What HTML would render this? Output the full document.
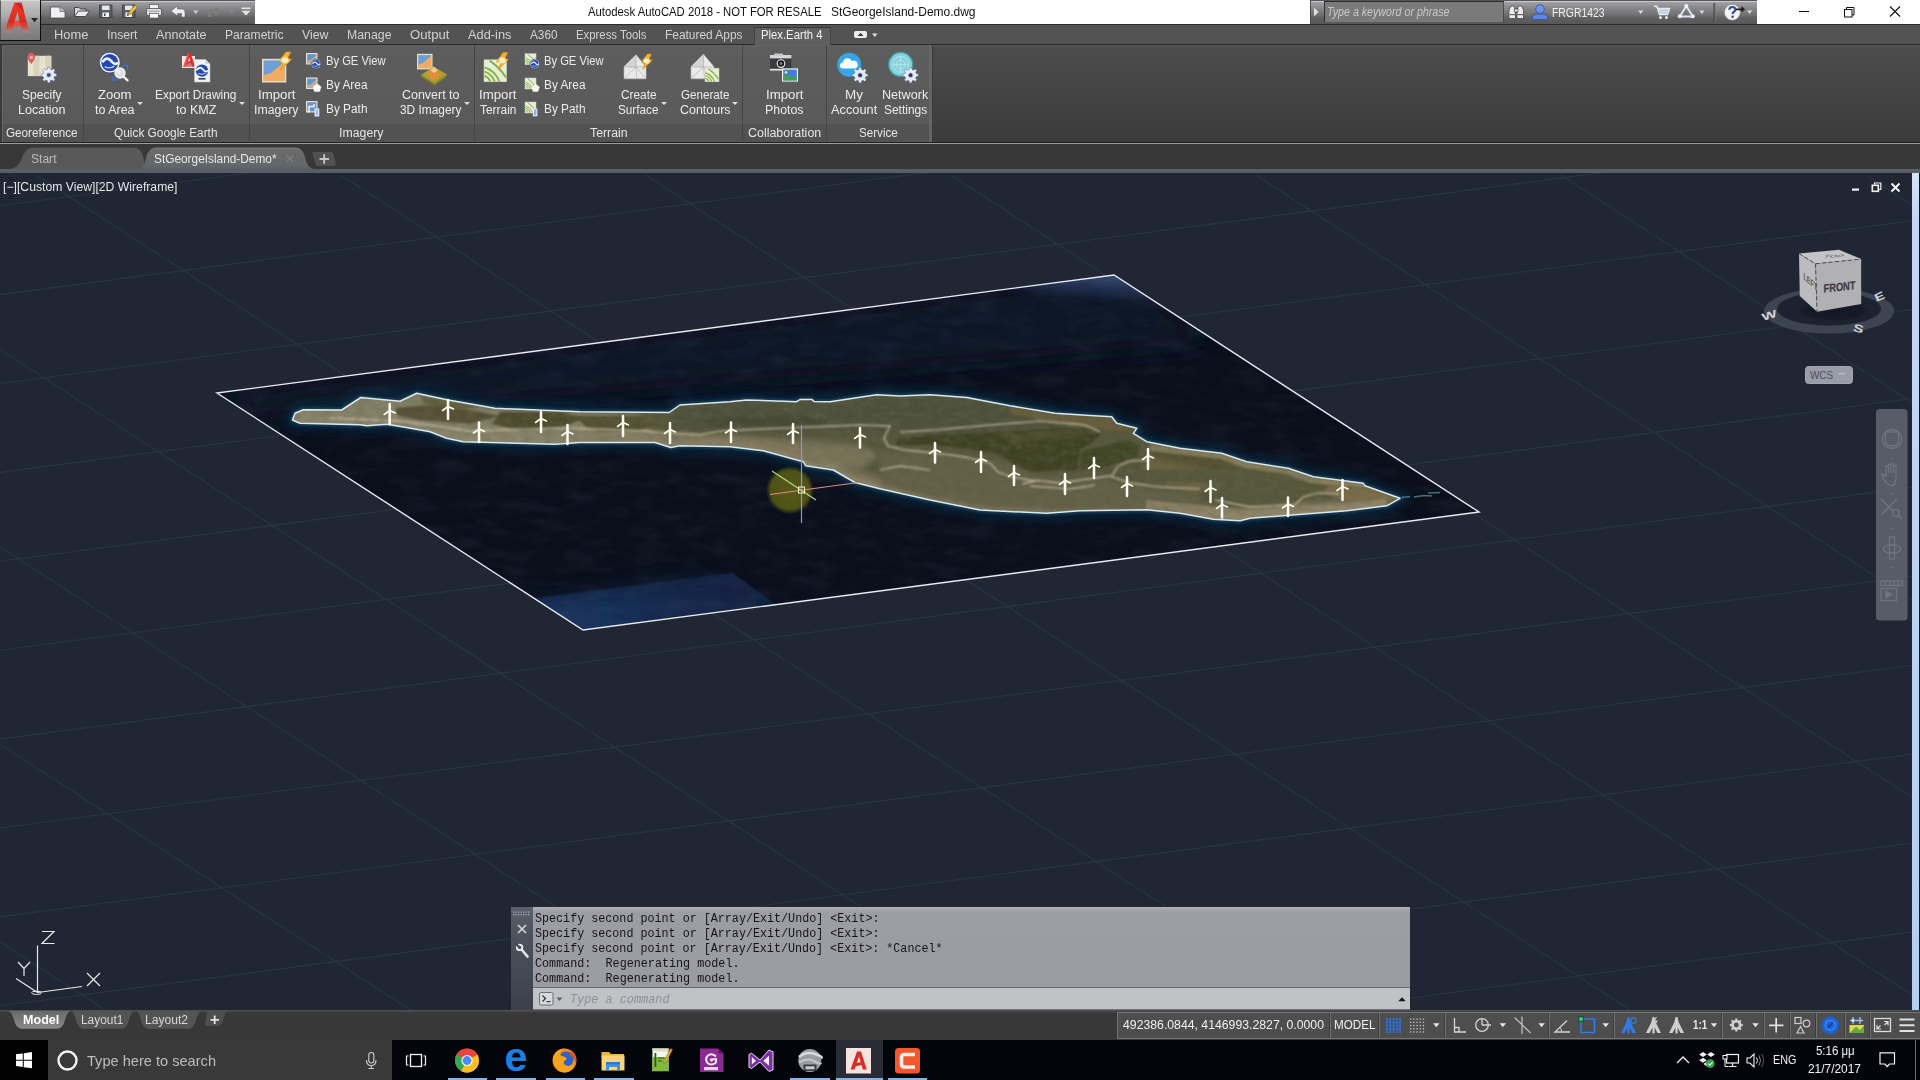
<!DOCTYPE html>
<html lang="en"><head><meta charset="utf-8"><title>Autodesk AutoCAD 2018 - StGeorgeIsland-Demo.dwg</title>
<style>
html,body{margin:0;padding:0;background:#202634;}
body{width:1920px;height:1080px;overflow:hidden;position:relative;font-family:"Liberation Sans",sans-serif;}
.a{position:absolute;display:block}
.t{position:absolute;white-space:pre;transform-origin:0 50%;}
.cv{position:absolute;left:0;top:0}

</style></head><body>
<svg class="cv" width="1920" height="1080" viewBox="0 0 1920 1080">
<defs>
<clipPath id="cq"><polygon points="217.0,393.0 1114.0,275.0 1479.0,512.0 583.0,630.0"/></clipPath>
<clipPath id="ci"><polygon points="292.5,420.0 295.0,413.3 303.3,409.7 341.7,410.0 360.8,397.5 400.0,401.3 416.7,393.3 448.3,400.0 495.0,408.3 580.0,411.7 669.2,412.5 680.0,405.0 730.0,401.7 746.7,400.0 796.7,401.7 800.0,399.5 812.0,399.5 814.0,401.5 830.0,401.7 876.7,394.7 900.0,396.0 930.0,394.7 966.7,397.5 1010.0,405.8 1055.0,413.3 1090.0,415.5 1111.7,416.7 1116.7,423.3 1136.7,428.3 1133.3,433.3 1146.7,441.7 1180.0,448.3 1221.7,453.3 1246.7,461.7 1288.3,468.3 1313.3,476.7 1363.3,483.3 1365.0,485.8 1400.0,498.3 1386.7,505.8 1346.7,510.8 1250.0,518.3 1240.0,520.8 1213.3,519.2 1180.0,513.3 1146.7,509.7 1080.0,510.8 1046.7,513.3 980.0,510.0 930.0,500.0 900.0,493.3 880.0,488.8 855.0,482.5 833.3,470.0 805.8,465.8 803.3,461.7 763.3,450.8 730.0,446.7 680.0,445.8 670.8,447.5 655.0,442.5 580.0,442.5 555.0,444.2 463.3,441.7 446.7,438.3 430.0,431.7 406.7,427.5 386.7,424.2 366.7,425.8 360.0,424.7 300.0,423.3"/></clipPath>
<clipPath id="cc"><rect x="0" y="173" width="1920" height="837"/></clipPath>
<filter id="b3" x="-20%" y="-20%" width="140%" height="140%"><feGaussianBlur stdDeviation="3"/></filter>
<filter id="b6" x="-20%" y="-20%" width="140%" height="140%"><feGaussianBlur stdDeviation="6"/></filter>
<filter id="b12" x="-30%" y="-30%" width="160%" height="160%"><feGaussianBlur stdDeviation="12"/></filter>
<filter id="b1" x="-20%" y="-20%" width="140%" height="140%"><feGaussianBlur stdDeviation=".8"/></filter>
<filter id="b2" x="-20%" y="-20%" width="140%" height="140%"><feGaussianBlur stdDeviation="1.3"/></filter>
<radialGradient id="glow"><stop offset="0" stop-color="#5c5f18" stop-opacity=".92"/><stop offset=".8" stop-color="#565914" stop-opacity=".9"/><stop offset="1" stop-color="#5a5a10" stop-opacity="0"/></radialGradient>
<filter id="nzi" x="0" y="0" width="100%" height="100%"><feTurbulence type="fractalNoise" baseFrequency=".09 .16" numOctaves="3" seed="7"/><feColorMatrix type="matrix" values="0 0 0 0 .5  0 0 0 0 .5  0 0 0 0 .4  1.6 1.2 0 0 -1.15"/></filter>
<filter id="nzd" x="0" y="0" width="100%" height="100%"><feTurbulence type="fractalNoise" baseFrequency=".09 .16" numOctaves="3" seed="23"/><feColorMatrix type="matrix" values="0 0 0 0 .12  0 0 0 0 .14  0 0 0 0 .08  1.6 1.2 0 0 -1.2"/></filter>
<filter id="nzo" x="0" y="0" width="100%" height="100%"><feTurbulence type="fractalNoise" baseFrequency=".03 .08" numOctaves="3" seed="3"/><feColorMatrix type="matrix" values="0 0 0 0 .16  0 0 0 0 .24  0 0 0 0 .40  1.3 1.0 0 0 -.95"/></filter>
<linearGradient id="blp" gradientUnits="userSpaceOnUse" x1="560" y1="620" x2="770" y2="590"><stop offset="0" stop-color="#1c3560"/><stop offset=".5" stop-color="#162a4e"/><stop offset="1" stop-color="#11203e"/></linearGradient>
</defs>
<g clip-path="url(#cc)">
<rect x="0" y="173" width="1920" height="837" fill="#202634"/>
<g stroke="#343b4b" stroke-width="1.1" fill="none" opacity=".62">
<line x1="0" y1="27.9" x2="1920" y2="-224.8"/>
<line x1="0" y1="116.8" x2="1920" y2="-135.9"/>
<line x1="0" y1="205.7" x2="1920" y2="-47.0"/>
<line x1="0" y1="294.6" x2="1920" y2="41.9"/>
<line x1="0" y1="383.5" x2="1920" y2="130.8"/>
<line x1="0" y1="472.4" x2="1920" y2="219.7"/>
<line x1="0" y1="561.3" x2="1920" y2="308.6"/>
<line x1="0" y1="650.2" x2="1920" y2="397.5"/>
<line x1="0" y1="739.1" x2="1920" y2="486.4"/>
<line x1="0" y1="828.0" x2="1920" y2="575.3"/>
<line x1="0" y1="916.9" x2="1920" y2="664.2"/>
<line x1="0" y1="1005.8" x2="1920" y2="753.1"/>
<line x1="0" y1="1094.7" x2="1920" y2="842.0"/>
<line x1="0" y1="1183.6" x2="1920" y2="930.9"/>
<line x1="0" y1="1272.5" x2="1920" y2="1019.8"/>
<line x1="-1489.2" y1="175" x2="-199.6" y2="1010"/>
<line x1="-1184.2" y1="175" x2="105.4" y2="1010"/>
<line x1="-879.2" y1="175" x2="410.4" y2="1010"/>
<line x1="-574.2" y1="175" x2="715.4" y2="1010"/>
<line x1="-269.2" y1="175" x2="1020.4" y2="1010"/>
<line x1="35.8" y1="175" x2="1325.4" y2="1010"/>
<line x1="340.8" y1="175" x2="1630.4" y2="1010"/>
<line x1="645.8" y1="175" x2="1935.4" y2="1010"/>
<line x1="950.8" y1="175" x2="2240.4" y2="1010"/>
<line x1="1255.8" y1="175" x2="2545.4" y2="1010"/>
<line x1="1560.8" y1="175" x2="2850.4" y2="1010"/>
<line x1="1865.8" y1="175" x2="3155.4" y2="1010"/>
<line x1="2170.8" y1="175" x2="3460.4" y2="1010"/>
<line x1="2475.8" y1="175" x2="3765.4" y2="1010"/>
</g>
<g clip-path="url(#cq)">
<polygon points="217.0,393.0 1114.0,275.0 1479.0,512.0 583.0,630.0" fill="#0b0f1b"/>
<polygon points="217.0,393.0 1114.0,275.0 1216.5,341.4 260.9,421.4" fill="#0e1528" filter="url(#b12)"/>
<polygon points="995.4,282.0 1129.9,264.3 1184.8,299.9 1112.7,295.1 1055.0,292.7" fill="#26385c" filter="url(#b6)" opacity=".85"/>
<polygon points="1040.2,276.1 1129.9,264.3 1162.9,285.7 1107.0,284.5" fill="#34486c" filter="url(#b3)" opacity=".7"/>
<polygon points="516.7,601.1 732.0,572.8 783.2,609.4 572.4,637.1" fill="url(#blp)" filter="url(#b2)"/>
<polygon points="506.5,594.4 703.8,568.5 725.8,582.7 528.5,608.7" fill="#101d38" filter="url(#b6)" opacity=".45"/>
<rect x="210" y="270" width="1280" height="365" filter="url(#nzo)" opacity=".1"/>
<polygon points="292.5,420.0 295.0,413.3 303.3,409.7 341.7,410.0 360.8,397.5 400.0,401.3 416.7,393.3 448.3,400.0 495.0,408.3 580.0,411.7 669.2,412.5 680.0,405.0 730.0,401.7 746.7,400.0 796.7,401.7 800.0,399.5 812.0,399.5 814.0,401.5 830.0,401.7 876.7,394.7 900.0,396.0 930.0,394.7 966.7,397.5 1010.0,405.8 1055.0,413.3 1090.0,415.5 1111.7,416.7 1116.7,423.3 1136.7,428.3 1133.3,433.3 1146.7,441.7 1180.0,448.3 1221.7,453.3 1246.7,461.7 1288.3,468.3 1313.3,476.7 1363.3,483.3 1365.0,485.8 1400.0,498.3 1386.7,505.8 1346.7,510.8 1250.0,518.3 1240.0,520.8 1213.3,519.2 1180.0,513.3 1146.7,509.7 1080.0,510.8 1046.7,513.3 980.0,510.0 930.0,500.0 900.0,493.3 880.0,488.8 855.0,482.5 833.3,470.0 805.8,465.8 803.3,461.7 763.3,450.8 730.0,446.7 680.0,445.8 670.8,447.5 655.0,442.5 580.0,442.5 555.0,444.2 463.3,441.7 446.7,438.3 430.0,431.7 406.7,427.5 386.7,424.2 366.7,425.8 360.0,424.7 300.0,423.3" fill="none" stroke="#0f2c44" stroke-width="10" filter="url(#b6)"/>
<polygon points="292.5,420.0 295.0,413.3 303.3,409.7 341.7,410.0 360.8,397.5 400.0,401.3 416.7,393.3 448.3,400.0 495.0,408.3 580.0,411.7 669.2,412.5 680.0,405.0 730.0,401.7 746.7,400.0 796.7,401.7 800.0,399.5 812.0,399.5 814.0,401.5 830.0,401.7 876.7,394.7 900.0,396.0 930.0,394.7 966.7,397.5 1010.0,405.8 1055.0,413.3 1090.0,415.5 1111.7,416.7 1116.7,423.3 1136.7,428.3 1133.3,433.3 1146.7,441.7 1180.0,448.3 1221.7,453.3 1246.7,461.7 1288.3,468.3 1313.3,476.7 1363.3,483.3 1365.0,485.8 1400.0,498.3 1386.7,505.8 1346.7,510.8 1250.0,518.3 1240.0,520.8 1213.3,519.2 1180.0,513.3 1146.7,509.7 1080.0,510.8 1046.7,513.3 980.0,510.0 930.0,500.0 900.0,493.3 880.0,488.8 855.0,482.5 833.3,470.0 805.8,465.8 803.3,461.7 763.3,450.8 730.0,446.7 680.0,445.8 670.8,447.5 655.0,442.5 580.0,442.5 555.0,444.2 463.3,441.7 446.7,438.3 430.0,431.7 406.7,427.5 386.7,424.2 366.7,425.8 360.0,424.7 300.0,423.3" fill="none" stroke="#185064" stroke-width="4.5" filter="url(#b2)" opacity=".7"/>
</g>
<polygon points="292.5,420.0 295.0,413.3 303.3,409.7 341.7,410.0 360.8,397.5 400.0,401.3 416.7,393.3 448.3,400.0 495.0,408.3 580.0,411.7 669.2,412.5 680.0,405.0 730.0,401.7 746.7,400.0 796.7,401.7 800.0,399.5 812.0,399.5 814.0,401.5 830.0,401.7 876.7,394.7 900.0,396.0 930.0,394.7 966.7,397.5 1010.0,405.8 1055.0,413.3 1090.0,415.5 1111.7,416.7 1116.7,423.3 1136.7,428.3 1133.3,433.3 1146.7,441.7 1180.0,448.3 1221.7,453.3 1246.7,461.7 1288.3,468.3 1313.3,476.7 1363.3,483.3 1365.0,485.8 1400.0,498.3 1386.7,505.8 1346.7,510.8 1250.0,518.3 1240.0,520.8 1213.3,519.2 1180.0,513.3 1146.7,509.7 1080.0,510.8 1046.7,513.3 980.0,510.0 930.0,500.0 900.0,493.3 880.0,488.8 855.0,482.5 833.3,470.0 805.8,465.8 803.3,461.7 763.3,450.8 730.0,446.7 680.0,445.8 670.8,447.5 655.0,442.5 580.0,442.5 555.0,444.2 463.3,441.7 446.7,438.3 430.0,431.7 406.7,427.5 386.7,424.2 366.7,425.8 360.0,424.7 300.0,423.3" fill="#55553c"/>
<g clip-path="url(#ci)">
<polygon points="1386.7,505.8 1346.7,510.8 1250.0,518.3 1240.0,520.8 1213.3,519.2 1180.0,513.3 1146.7,509.7 1080.0,510.8 1046.7,513.3 980.0,510.0 930.0,500.0 900.0,493.3 880.0,488.8 855.0,482.5 833.3,470.0 805.8,465.8 803.3,461.7 763.3,450.8 730.0,446.7 680.0,445.8 670.8,447.5 655.0,442.5 580.0,442.5 555.0,444.2 463.3,441.7 446.7,438.3 430.0,431.7 406.7,427.5 386.7,424.2 366.7,425.8 360.0,424.7 300.0,423.3 300.0,412.3 360.0,413.7 366.7,414.8 386.7,413.2 406.7,416.5 430.0,420.7 446.7,427.3 463.3,430.7 555.0,433.2 580.0,431.5 655.0,431.5 670.8,436.5 680.0,434.8 730.0,435.7 763.3,439.8 803.3,450.7 805.8,454.8 833.3,459.0 855.0,471.5 880.0,477.8 900.0,482.3 930.0,489.0 980.0,499.0 1046.7,502.3 1080.0,499.8 1146.7,498.7 1180.0,502.3 1213.3,508.2 1240.0,509.8 1250.0,507.3 1346.7,499.8 1386.7,494.8" fill="#81775d" filter="url(#b3)"/>
<polygon points="1386.7,505.8 1346.7,510.8 1250.0,518.3 1240.0,520.8 1213.3,519.2 1180.0,513.3 1146.7,509.7 1080.0,510.8 1046.7,513.3 980.0,510.0 930.0,500.0 900.0,493.3 880.0,488.8 855.0,482.5 833.3,470.0 805.8,465.8 803.3,461.7 763.3,450.8 730.0,446.7 680.0,445.8 670.8,447.5 655.0,442.5 580.0,442.5 555.0,444.2 463.3,441.7 446.7,438.3 430.0,431.7 406.7,427.5 386.7,424.2 366.7,425.8 360.0,424.7 300.0,423.3 300.0,418.3 360.0,419.7 366.7,420.8 386.7,419.2 406.7,422.5 430.0,426.7 446.7,433.3 463.3,436.7 555.0,439.2 580.0,437.5 655.0,437.5 670.8,442.5 680.0,440.8 730.0,441.7 763.3,445.8 803.3,456.7 805.8,460.8 833.3,465.0 855.0,477.5 880.0,483.8 900.0,488.3 930.0,495.0 980.0,505.0 1046.7,508.3 1080.0,505.8 1146.7,504.7 1180.0,508.3 1213.3,514.2 1240.0,515.8 1250.0,513.3 1346.7,505.8 1386.7,500.8" fill="#91876e" filter="url(#b2)" opacity=".8"/>
<polygon points="290,405 345,405 362,395 420,392 500,408 640,414 660,446 440,446 290,428" fill="#8a846c" filter="url(#b3)" opacity=".9"/>
<polygon points="395,408 440,404 470,410 500,416 470,424 420,420 398,416" fill="#544f34" filter="url(#b2)"/>
<polygon points="500,412 560,412 585,418 560,428 520,430 492,424" fill="#4d4b2e" filter="url(#b2)"/>
<polygon points="575,416 640,416 665,422 640,430 600,432 585,426" fill="#524f31" filter="url(#b2)"/>
<polygon points="420,396 450,401 480,407 460,410 425,404" fill="#615b3d" filter="url(#b2)"/>
<polygon points="672,410 700,404 760,402 830,403 880,396 930,396 970,399 1010,407 1060,415 1110,418 1112,428 1060,430 1000,432 930,436 880,430 840,428 790,430 740,428 700,430 672,424" fill="#4e503a" filter="url(#b3)"/>
<polygon points="700,420 760,414 800,416 830,422 800,428 760,428 715,428" fill="#464a34" filter="url(#b2)"/>
<polygon points="560,430 700,436 800,440 860,445 880,455 860,470 830,466 800,458 760,448 700,444 600,442" fill="#837a60" filter="url(#b3)" opacity=".8"/>
<polygon points="880,450 940,452 1000,462 1040,476 1100,478 1160,490 1200,495 1200,512 1050,512 980,508 930,498 880,486" fill="#645f47" filter="url(#b3)"/>
<polygon points="896.7,438.3 935,435 996.7,432.5 1046.7,429.2 1088.3,427.5 1101.7,433.3 1093.3,441.7 1080,450 1076.7,470 1030,471.7 1013.3,463.3 996.7,453.3 963.3,448.3 935,445 896.7,445" fill="#3e4124" filter="url(#b2)"/>
<polygon points="1080,451.7 1126.7,440 1140,445 1136.7,456.7 1113.3,465 1101.7,468.3 1080,470" fill="#414527" filter="url(#b2)"/>
<polygon points="1000,434 1046,430 1088,428 1098,433 1060,440 1010,444" fill="#484a2b" filter="url(#b2)"/>
<polygon points="1150,444 1200,452 1246,463 1290,470 1330,482 1300,492 1250,490 1200,478 1160,468" fill="#544f30" filter="url(#b3)"/>
<polygon points="1230,480 1290,486 1330,492 1300,500 1250,500 1225,494" fill="#5a5233" filter="url(#b2)"/>
<polygon points="1150,458 1200,468 1215,488 1190,492 1160,482 1140,470" fill="#756645" filter="url(#b3)" opacity=".8"/>
<polygon points="1300,478 1364,485 1398,498 1385,505 1340,500" fill="#7e6e4c" filter="url(#b2)" opacity=".85"/>
<polygon points="1010,406 1055,414 1110,417 1116,424 1136,428 1120,432 1060,424 1010,414" fill="#655c3b" filter="url(#b2)"/>
<polygon points="1135,470 1200,468.3 1250,470 1283.3,475 1313.3,481.7 1330,486.7 1316.7,493.3 1291.7,498.3 1266.7,505 1233.3,503.3 1223.3,490 1206.7,483.3 1166.7,481.7 1135,481.7" fill="#57573a" filter="url(#b2)"/>
<polygon points="1150,444 1222,453 1247,462 1288,468.5 1313,477 1363,483.5 1366,487 1310,483 1285,474 1244,468 1220,459 1150,451" fill="#8b8262" filter="url(#b2)" opacity=".85"/>
<polygon points="1146,500 1250,510 1346,503 1386,499 1386,507 1346,511.5 1250,519 1213,520 1146,510" fill="#93866a" filter="url(#b2)" opacity=".8"/>
<g fill="none" stroke="#cfc6ad" stroke-width="1.5" opacity=".85" filter="url(#b1)">
<path d="M330,418 L400,421 L470,431 L560,428 L625,430 L700,435 L720,431 L760,429 L860,425 L890,426 L884,438 L888,446 L905,450 L935,453 L965,457 L990,463 L998,472 L1012,477 L1030,480 L1060,483 L1095,478 L1110,476 L1130,483 L1160,487 L1200,489"/>
<path d="M1112,476 L1118,466 L1130,461 L1150,460"/>
<path d="M1022,484 L1040,480 M1030,486 L1070,489 L1095,485"/>
<path d="M900,432 L935,430 L990,425 L1040,421 L1085,425 L1100,432"/>
<path d="M1215,500 L1250,507 L1295,505 L1303,497 L1318,493 L1340,494"/>
<path d="M880,470 L900,466 L930,470"/>
</g>
<rect x="280" y="385" width="1130" height="145" filter="url(#nzi)" opacity=".07"/>
<rect x="280" y="385" width="1130" height="145" filter="url(#nzd)" opacity=".4"/>
</g>
<polygon points="292.5,420.0 295.0,413.3 303.3,409.7 341.7,410.0 360.8,397.5 400.0,401.3 416.7,393.3 448.3,400.0 495.0,408.3 580.0,411.7 669.2,412.5 680.0,405.0 730.0,401.7 746.7,400.0 796.7,401.7 800.0,399.5 812.0,399.5 814.0,401.5 830.0,401.7 876.7,394.7 900.0,396.0 930.0,394.7 966.7,397.5 1010.0,405.8 1055.0,413.3 1090.0,415.5 1111.7,416.7 1116.7,423.3 1136.7,428.3 1133.3,433.3 1146.7,441.7 1180.0,448.3 1221.7,453.3 1246.7,461.7 1288.3,468.3 1313.3,476.7 1363.3,483.3 1365.0,485.8 1400.0,498.3 1386.7,505.8 1346.7,510.8 1250.0,518.3 1240.0,520.8 1213.3,519.2 1180.0,513.3 1146.7,509.7 1080.0,510.8 1046.7,513.3 980.0,510.0 930.0,500.0 900.0,493.3 880.0,488.8 855.0,482.5 833.3,470.0 805.8,465.8 803.3,461.7 763.3,450.8 730.0,446.7 680.0,445.8 670.8,447.5 655.0,442.5 580.0,442.5 555.0,444.2 463.3,441.7 446.7,438.3 430.0,431.7 406.7,427.5 386.7,424.2 366.7,425.8 360.0,424.7 300.0,423.3" fill="none" stroke="#dce8f0" stroke-width="1.5" stroke-linejoin="round"/>
<g stroke="#fffdf2" fill="none" stroke-linecap="round">
<line x1="389.7" y1="404" x2="389.7" y2="424" stroke-width="2.5"/>
<path d="M384.2,414.5 L389.7,410.5 L395.2,413.0" stroke-width="1.6"/>
<line x1="448" y1="400" x2="448" y2="419" stroke-width="2.5"/>
<path d="M442.5,410.5 L448,406.5 L453.5,409.0" stroke-width="1.6"/>
<line x1="479" y1="422.5" x2="479" y2="442" stroke-width="2.5"/>
<path d="M473.5,433.0 L479,429.0 L484.5,431.5" stroke-width="1.6"/>
<line x1="541" y1="412" x2="541" y2="432" stroke-width="2.5"/>
<path d="M535.5,422.5 L541,418.5 L546.5,421.0" stroke-width="1.6"/>
<line x1="567.5" y1="425" x2="567.5" y2="444" stroke-width="2.5"/>
<path d="M562.0,435.5 L567.5,431.5 L573.0,434.0" stroke-width="1.6"/>
<line x1="623" y1="416" x2="623" y2="436" stroke-width="2.5"/>
<path d="M617.5,426.5 L623,422.5 L628.5,425.0" stroke-width="1.6"/>
<line x1="670" y1="423" x2="670" y2="443" stroke-width="2.5"/>
<path d="M664.5,433.5 L670,429.5 L675.5,432.0" stroke-width="1.6"/>
<line x1="731" y1="422.5" x2="731" y2="442" stroke-width="2.5"/>
<path d="M725.5,433.0 L731,429.0 L736.5,431.5" stroke-width="1.6"/>
<line x1="793" y1="424" x2="793" y2="443" stroke-width="2.5"/>
<path d="M787.5,434.5 L793,430.5 L798.5,433.0" stroke-width="1.6"/>
<line x1="860" y1="428" x2="860" y2="447.5" stroke-width="2.5"/>
<path d="M854.5,438.5 L860,434.5 L865.5,437.0" stroke-width="1.6"/>
<line x1="935" y1="443" x2="935" y2="462.5" stroke-width="2.5"/>
<path d="M929.5,453.5 L935,449.5 L940.5,452.0" stroke-width="1.6"/>
<line x1="981" y1="452" x2="981" y2="472" stroke-width="2.5"/>
<path d="M975.5,462.5 L981,458.5 L986.5,461.0" stroke-width="1.6"/>
<line x1="1014" y1="466" x2="1014" y2="485" stroke-width="2.5"/>
<path d="M1008.5,476.5 L1014,472.5 L1019.5,475.0" stroke-width="1.6"/>
<line x1="1065" y1="474" x2="1065" y2="494" stroke-width="2.5"/>
<path d="M1059.5,484.5 L1065,480.5 L1070.5,483.0" stroke-width="1.6"/>
<line x1="1094" y1="458" x2="1094" y2="478" stroke-width="2.5"/>
<path d="M1088.5,468.5 L1094,464.5 L1099.5,467.0" stroke-width="1.6"/>
<line x1="1148" y1="449" x2="1148" y2="469" stroke-width="2.5"/>
<path d="M1142.5,459.5 L1148,455.5 L1153.5,458.0" stroke-width="1.6"/>
<line x1="1127" y1="477" x2="1127" y2="496" stroke-width="2.5"/>
<path d="M1121.5,487.5 L1127,483.5 L1132.5,486.0" stroke-width="1.6"/>
<line x1="1210.5" y1="481" x2="1210.5" y2="502" stroke-width="2.5"/>
<path d="M1205.0,491.5 L1210.5,487.5 L1216.0,490.0" stroke-width="1.6"/>
<line x1="1222" y1="498" x2="1222" y2="517.5" stroke-width="2.5"/>
<path d="M1216.5,508.5 L1222,504.5 L1227.5,507.0" stroke-width="1.6"/>
<line x1="1288" y1="497.5" x2="1288" y2="516" stroke-width="2.5"/>
<path d="M1282.5,508.0 L1288,504.0 L1293.5,506.5" stroke-width="1.6"/>
<line x1="1342.5" y1="480" x2="1342.5" y2="500" stroke-width="2.5"/>
<path d="M1337.0,490.5 L1342.5,486.5 L1348.0,489.0" stroke-width="1.6"/>
</g>
<path d="M1402,497.5 L1410,496.5 M1414,497 L1424,495.5 L1432,496 M1428,493 L1440,492.5" stroke="#5f9aa8" stroke-width="1.3" fill="none" opacity=".7"/>
<polygon points="217.0,393.0 1114.0,275.0 1479.0,512.0 583.0,630.0" fill="none" stroke="#e8ecf2" stroke-width="1.4"/>
<circle cx="790" cy="490" r="24" fill="url(#glow)"/>
<line x1="801.5" y1="425" x2="801.5" y2="523" stroke="#8f8ee8" stroke-width="1.2"/>
<line x1="770" y1="494.5" x2="858" y2="482.5" stroke="#e08a86" stroke-width="1.2"/>
<line x1="772" y1="471" x2="816" y2="500" stroke="#a8d890" stroke-width="1.2"/>
<rect x="798.5" y="487" width="6" height="6" fill="none" stroke="#fff8c0" stroke-width="1"/>
</g>
</svg>
<div class="a" style="left:1912px;top:173px;width:7px;height:837px;background:linear-gradient(#d6e6f8 0,#c2d8f4 40px,#b4cef0 100%);"></div>
<div class="a" style="left:1919px;top:173px;width:1px;height:837px;background:#0c1222;"></div>
<div class="t" style="left:2.7px;top:179.5px;font:400 12px/15px 'Liberation Sans',sans-serif;color:#e6e6e6;transform:scaleX(1.0175);">[−][Custom View][2D Wireframe]</div>
<svg class="a" style="left:1840px;top:178px;" width="70" height="20" viewBox="1840 178 70 20"><rect x="1852" y="188.5" width="7" height="2.2" fill="#f0f0f0"/><rect x="1872.3" y="185.3" width="6" height="6" fill="none" stroke="#f0f0f0" stroke-width="1.6"/><path d="M1874.5,184.5 L1874.5,183 L1880.8,183 L1880.8,189.5 L1879,189.5" fill="none" stroke="#f0f0f0" stroke-width="1.2"/><path d="M1891.5,183.5 L1899.5,191.5 M1899.5,183.5 L1891.5,191.5" stroke="#f4f4f4" stroke-width="2"/></svg>
<svg class="a" style="left:1740px;top:230px;" width="180" height="170" viewBox="1740 230 180 170"><defs><radialGradient id="vsh"><stop offset="0" stop-color="#141826"/><stop offset=".75" stop-color="#171b29"/><stop offset="1" stop-color="#1d2231" stop-opacity="0"/></radialGradient></defs>
<ellipse cx="1829" cy="311" rx="65" ry="22.6" fill="#3e4452"/>
<ellipse cx="1829" cy="308.8" rx="52" ry="16.8" fill="#1d2230"/>
<ellipse cx="1833" cy="311" rx="40" ry="11" fill="url(#vsh)"/>
<polygon points="1799,253.6 1839.1,249.7 1861.2,259.1 1815.5,263.8" fill="#c4c4c6"/>
<polygon points="1799,253.6 1815.5,263.8 1817.1,311.8 1799.8,296.1" fill="#bcbcbe"/>
<polygon points="1815.5,263.8 1861.2,259.1 1861.2,304 1817.1,311.8" fill="#b1b1b4"/>
<path d="M1799,253.6 L1815.5,263.8 L1861.2,259.1 M1815.5,263.8 L1817.1,311.8" fill="none" stroke="#4a4a50" stroke-width="1" stroke-dasharray="4 2.5"/>
<text transform="translate(1823.5,292.5) skewY(-5.8)" font-family="Liberation Sans, sans-serif" font-weight="700" font-size="11.6" fill="#3a3a40" stroke="#3a3a40" stroke-width=".25" textLength="32" lengthAdjust="spacingAndGlyphs">FRONT</text>
<text transform="translate(1803.5,279) skewY(42) scale(.55,1)" font-family="Liberation Sans, sans-serif" font-weight="700" font-size="10" fill="#55555b">LEFT</text>
<text transform="translate(1823,257.8) skewX(-50) scale(1,.45) rotate(-4)" font-family="Liberation Sans, sans-serif" font-weight="700" font-size="9" fill="#77777d">TOP</text>
<text transform="translate(1763,321) rotate(-17) scale(1.25,.8)" font-family="Liberation Sans, sans-serif" font-weight="700" font-size="13" fill="#d2d2d6">W</text>
<text transform="translate(1852.5,331) rotate(14) scale(1.2,.85)" font-family="Liberation Sans, sans-serif" font-weight="700" font-size="13" fill="#d2d2d6">S</text>
<text transform="translate(1876.5,302) rotate(-24) scale(1.15,.85)" font-family="Liberation Sans, sans-serif" font-weight="700" font-size="13" fill="#d2d2d6">E</text>
<rect x="1805.5" y="366.5" width="47" height="17" rx="3" fill="#9a9ca9" stroke="#b4b6c2" stroke-width=".8"/>
<text x="1810" y="379" font-family="Liberation Sans, sans-serif" font-size="10.5" fill="#4e505c" textLength="23" lengthAdjust="spacingAndGlyphs">WCS</text>
<rect x="1838.5" y="373" width="6.5" height="1.3" fill="#b9bbc6"/></svg>
<svg class="a" style="left:1870px;top:405px;" width="45" height="220" viewBox="1870 405 45 220"><rect x="1876" y="409" width="31.5" height="211.5" rx="3.5" fill="#575c66"/>
<g fill="none" stroke="#6e737d" stroke-width="1.4">
<circle cx="1892" cy="439" r="9.5"/><path d="M1885.5,432 V441 Q1885.5,446 1892,446 Q1898.5,446 1898.5,441 V432"/><path d="M1885.5,432 H1898.5"/>
<path d="M1887,484 Q1883,479 1882,474 L1886,476 V466 H1888.5 V473 V464.5 H1891 V473 V464 H1893.5 V473 V465.5 H1896 V478 Q1896,483 1893,486 Z"/>
<path d="M1881,499 L1897,515 M1897,499 L1881,515"/><circle cx="1896" cy="513" r="3.4" fill="#575c66"/><path d="M1898.5,515.5 L1902,519"/>
<ellipse cx="1892" cy="549" rx="9" ry="4"/><rect x="1889.5" y="537" width="5" height="22"/>
<rect x="1881" y="581" width="21.5" height="4.5"/><path d="M1885.3,581 V585.5 M1889.6,581 V585.5 M1893.9,581 V585.5 M1898.2,581 V585.5"/>
<rect x="1881" y="588.5" width="15.5" height="12"/><path d="M1886,591.5 L1892,594.5 L1886,597.5 Z" fill="#6e737d"/>
</g>
<g fill="#6e737d"><circle cx="1892" cy="458.5" r="1"/><circle cx="1892" cy="494" r="1"/><circle cx="1892" cy="528.5" r="1"/><circle cx="1892" cy="567.5" r="1"/></g></svg>
<svg class="a" style="left:0px;top:920px;" width="120" height="85" viewBox="0 920 120 85"><g fill="none" stroke="#e8e8e8" stroke-width="1.2">
<path d="M37.5,992.5 V945.5"/><path d="M37.5,992.5 L82,986.5"/><path d="M37.5,992.5 L16,978.5"/>
<ellipse cx="36.5" cy="992.8" rx="5" ry="1.6" stroke-width="1"/>
<path d="M42,931.5 H54 L42,943.5 H54.5"/>
<path d="M87,973 L100,986 M100,973 L87,986"/>
<path d="M18,962 L24,968.5 L30,962 M24,968.5 V976"/>
</g></svg>
<div class="a" style="left:511px;top:907px;width:899px;height:103px;background:linear-gradient(#aeb0b6 0,#9d9ea3 5px,#9a9ba0 100%);"></div>
<div class="a" style="left:511px;top:907px;width:22px;height:103px;background:linear-gradient(#5c606a 0,#4d515b 30%,#3c404a 100%);"></div>
<div class="a" style="left:533px;top:987px;width:877px;height:22.8px;background:#c1c2c6;border-top:1px solid #66686e;box-sizing:border-box"></div>
<div class="a" style="left:533px;top:1009px;width:877px;height:1.5px;background:#70727b;"></div>
<div class="t" style="left:535.4px;top:912.3px;font:400 12px/15px 'Liberation Mono',monospace;color:#14141a;transform:scaleX(0.9763);">Specify second point or [Array/Exit/Undo] &lt;Exit&gt;:</div>
<div class="t" style="left:535.4px;top:927.3px;font:400 12px/15px 'Liberation Mono',monospace;color:#14141a;transform:scaleX(0.9763);">Specify second point or [Array/Exit/Undo] &lt;Exit&gt;:</div>
<div class="t" style="left:535.4px;top:942.3px;font:400 12px/15px 'Liberation Mono',monospace;color:#14141a;transform:scaleX(0.9757);">Specify second point or [Array/Exit/Undo] &lt;Exit&gt;: *Cancel*</div>
<div class="t" style="left:535.4px;top:957.3px;font:400 12px/15px 'Liberation Mono',monospace;color:#14141a;transform:scaleX(0.9793);">Command:  Regenerating model.</div>
<div class="t" style="left:535.4px;top:972.3px;font:400 12px/15px 'Liberation Mono',monospace;color:#14141a;transform:scaleX(0.9793);">Command:  Regenerating model.</div>
<div class="t" style="left:570.4px;top:993.3px;font:italic 400 12px/15px 'Liberation Mono',monospace;color:#8e8f98;transform:scaleX(0.9869);">Type a command</div>
<svg class="a" style="left:505px;top:905px;" width="910" height="110" viewBox="505 905 910 110"><g fill="#a6a9b2"><rect x="513" y="911.5" width="1.3" height="1.3"/><rect x="515.5" y="911.5" width="1.3" height="1.3"/><rect x="518" y="911.5" width="1.3" height="1.3"/><rect x="520.5" y="911.5" width="1.3" height="1.3"/><rect x="523" y="911.5" width="1.3" height="1.3"/><rect x="525.5" y="911.5" width="1.3" height="1.3"/><rect x="528" y="911.5" width="1.3" height="1.3"/>
<rect x="513" y="914" width="1.3" height="1.3"/><rect x="515.5" y="914" width="1.3" height="1.3"/><rect x="518" y="914" width="1.3" height="1.3"/><rect x="520.5" y="914" width="1.3" height="1.3"/><rect x="523" y="914" width="1.3" height="1.3"/><rect x="525.5" y="914" width="1.3" height="1.3"/><rect x="528" y="914" width="1.3" height="1.3"/></g>
<path d="M518,925 L526,933 M526,925 L518,933" stroke="#d8d8dc" stroke-width="1.6"/>
<path d="M521.8,949.8 L527.6,956.6" stroke="#e6e6ea" stroke-width="2.5" stroke-linecap="round"/><circle cx="519.6" cy="947.4" r="2.7" fill="none" stroke="#e6e6ea" stroke-width="2"/><path d="M519.6,947.4 L515.5,943.6" stroke="#474b55" stroke-width="2.2"/>
<rect x="539.5" y="992.5" width="13.5" height="12.5" rx="1.5" fill="#d9dade" stroke="#6d6f79" stroke-width="1"/><path d="M542.5,995.5 L545.5,998.5 L542.5,1001.5" fill="none" stroke="#33343c" stroke-width="1.3"/><rect x="546.5" y="1001" width="4" height="1.2" fill="#33343c"/>
<path d="M556.5,997.5 L562.5,997.5 L559.5,1001 Z" fill="#5e6068"/>
<path d="M1398.3,1001.2 L1405.7,1001.2 L1402,997.3 Z" fill="#15151a"/></svg>
<div class="a" style="left:0px;top:0px;width:1920px;height:24px;background:#ffffff;"></div>
<div class="a" style="left:40px;top:0px;width:215px;height:24px;background:linear-gradient(#555 0,#555 1px,#c8c8cc 1px,#c8c8cc 2px,#a2a2a6 2px,#8c8c8f 7px,#6c6c6e 16px,#626262 17px,#575757 24px);"></div>
<div class="a" style="left:0px;top:0px;width:41px;height:41px;background:#0c0c0c;z-index:5"></div>
<div class="a" style="left:0px;top:0px;width:39.5px;height:39.5px;background:linear-gradient(#c4c4c4,#aeaeae 35%,#8e8e8e 60%,#7a7a7a);border-left:1px solid #5a5a5a;border-top:1px solid #d8d8d8;box-sizing:border-box;z-index:5"></div>
<svg class="a" style="left:0px;top:0px;z-index:6" width="40" height="40" viewBox="0 0 40 40"><defs><linearGradient id="ag" x1="0" y1="0" x2="0" y2="1"><stop offset="0" stop-color="#ee3a30"/><stop offset=".62" stop-color="#d92b23"/><stop offset=".8" stop-color="#d6423a" stop-opacity=".85"/><stop offset="1" stop-color="#cc8a84" stop-opacity=".35"/></linearGradient></defs>
<path d="M4,33 L14.3,2.8 L21.6,2.8 L29.6,33 L22.2,33 L20.6,25.8 L12.6,27.8 L11.2,33 Z M14.4,21.8 L19.4,20.6 L17.6,11.5 Z" fill="url(#ag)" fill-rule="evenodd"/>
<path d="M14.3,2.8 L21.6,2.8 L24.5,14 L18.5,6.5 Z" fill="#b01c15" opacity=".55"/>
<path d="M12.6,27.8 L20.6,25.8 L19.4,20.6 L14.4,21.8 Z" fill="#f0574c" opacity=".7"/>
<path d="M31,18 L38,18 L34.5,22.3 Z" fill="#262626"/></svg>
<svg class="a" style="left:0px;top:0px;" width="256" height="24" viewBox="0 0 256 24"><path d="M50.5,7 L60,7 L65,11.5 L65,18 L50.5,18 Z" fill="#f1f1f4" stroke="#4a4a4a" stroke-width=".8"/><path d="M60,7 L60,11.5 L65,11.5" fill="#c8c8cc" stroke="#555" stroke-width=".7"/><path d="M74.5,16.5 L74.5,7.5 L79,7.5 L80.5,9 L86,9 L86,11" fill="#d8d8dc" stroke="#3e3e3e" stroke-width=".9"/><path d="M74.5,16.5 L78.5,11 L89.5,11 L85.5,16.5 Z" fill="#ececf0" stroke="#3e3e3e" stroke-width=".9"/><rect x="99.5" y="5" width="12.5" height="12.5" fill="#5a5d68" stroke="#3a3c44" stroke-width=".8"/><rect x="102" y="5.5" width="7.5" height="4.5" fill="#e6e6ea"/><rect x="102.5" y="12.5" width="6.5" height="4.5" fill="#f4f4f6"/><rect x="104" y="13.5" width="1.5" height="2.5" fill="#444"/><rect x="122.5" y="5" width="12.5" height="12.5" fill="#5a5d68" stroke="#3a3c44" stroke-width=".8"/><rect x="125" y="5.5" width="7.5" height="4.5" fill="#e6e6ea"/><rect x="125.5" y="12.5" width="6.5" height="4.5" fill="#f4f4f6"/><rect x="127" y="13.5" width="1.5" height="2.5" fill="#c33"/><path d="M129,12 L135,5 L137.5,7 L131.5,14 L128.5,14.5 Z" fill="#e8c53a" stroke="#6a5a20" stroke-width=".6"/><rect x="149.5" y="4.5" width="9" height="5" fill="#f2f2f4" stroke="#555" stroke-width=".7"/><rect x="146.5" y="8.5" width="15" height="7" rx="1.5" fill="#e2e2e6" stroke="#4a4a4a" stroke-width=".8"/><rect x="149.5" y="13.5" width="9" height="4.5" fill="#fafafa" stroke="#555" stroke-width=".7"/><rect x="148.5" y="10.5" width="11" height="1.5" fill="#aaa"/><path d="M171,11 L177.5,6 L177.5,9 L182,9 Q185,9 185,12.5 L185,17 L181.5,17 L181.5,13.5 L177.5,13.5 L177.5,16 Z" fill="#ededf0" stroke="#555" stroke-width=".5"/><path d="M193,10.5 L198.5,10.5 L195.8,14 Z" fill="#c9c9c9"/><path d="M222,11 L215.5,6 L215.5,9 L211,9 Q208,9 208,12.5 L208,17 L211.5,17 L211.5,13.5 L215.5,13.5 L215.5,16 Z" fill="#7d7d7d"/><path d="M229.5,10.5 L234,10.5 L231.8,13.3 Z" fill="#8a8a8a"/><rect x="241.5" y="7.5" width="9" height="1.6" fill="#e4e4e4"/><path d="M241.5,10.8 L250.5,10.8 L246,15.5 Z" fill="#e4e4e4"/></svg>
<div class="t" style="left:588.4px;top:5.3px;font:400 12px/15px 'Liberation Sans',sans-serif;color:#111;transform:scaleX(0.9420);">Autodesk AutoCAD 2018 - NOT FOR RESALE</div>
<div class="t" style="left:831.4px;top:5.3px;font:400 12px/15px 'Liberation Sans',sans-serif;color:#111;transform:scaleX(0.9983);">StGeorgeIsland-Demo.dwg</div>
<div class="a" style="left:1310px;top:0px;width:447px;height:24px;background:linear-gradient(#555 0,#555 1px,#c8c8cc 1px,#c8c8cc 2px,#a2a2a6 2px,#8c8c8f 7px,#6c6c6e 16px,#626262 17px,#575757 24px);border-left:1px solid #4a4a4a;box-sizing:border-box"></div>
<div class="a" style="left:1324px;top:1px;width:180px;height:22px;background:#7a7a7a;border:1px solid #2e2e2e;border-bottom-color:#5a5a5a;border-right-color:#4a4a4a;box-sizing:border-box"></div>
<div class="t" style="left:1327.4px;top:5.3px;font:italic 400 12px/15px 'Liberation Sans',sans-serif;color:#c9c9c9;transform:scaleX(0.8887);">Type a keyword or phrase</div>
<div class="t" style="left:1552.4px;top:5.8px;font:400 12px/15px 'Liberation Sans',sans-serif;color:#f0f0f0;transform:scaleX(0.8650);">FRGR1423</div>
<svg class="a" style="left:0px;top:0px;" width="1760" height="24" viewBox="0 0 1760 24"><path d="M1314,7.5 L1318.5,12 L1314,16.5 Z" fill="#e0e0e0"/><g fill="#ededed" stroke="#3a3a3a" stroke-width=".7"><path d="M1509,18.5 L1509,10 L1511,6 L1514,6 L1515.5,10 L1515.5,18.5 Z"/><path d="M1517,18.5 L1517,10 L1518.5,6 L1521.5,6 L1523.5,10 L1523.5,18.5 Z"/><rect x="1514.5" y="9" width="3.5" height="3" /></g><rect x="1509.5" y="14" width="5.5" height="1.2" fill="#666"/><rect x="1517.5" y="14" width="5.5" height="1.2" fill="#666"/><circle cx="1540" cy="9" r="4.3" fill="#6c95ea" stroke="#2e4fa8" stroke-width=".8"/><path d="M1532,19.5 Q1532,14.5 1537,14 L1543,14 Q1548,14.5 1548,19.5 Z" fill="#5b86e4" stroke="#2e4fa8" stroke-width=".8"/><path d="M1638,10.5 L1643.5,10.5 L1640.7,14 Z" fill="#d8d8d8"/><path d="M1654,6 L1657,6.5 L1659.5,14.5 L1667.5,14.5 L1669.5,8.5 L1658,8.5" fill="none" stroke="#e8eaf4" stroke-width="1.6"/><path d="M1658.5,9 L1669,9 L1667.3,14 L1660,14 Z" fill="#cfd3e6"/><circle cx="1660.5" cy="17.5" r="1.5" fill="#e8eaf4"/><circle cx="1666.5" cy="17.5" r="1.5" fill="#e8eaf4"/><path d="M1686.3,6 L1692.8,16.5 L1679.8,16.5 Z" fill="none" stroke="#dfe2f2" stroke-width="2" stroke-linejoin="round"/><circle cx="1686.3" cy="6" r="2" fill="#eef0fa"/><circle cx="1692.8" cy="16.3" r="2" fill="#eef0fa"/><circle cx="1679.8" cy="16.3" r="2" fill="#eef0fa"/><path d="M1699.3,10.5 L1704.5,10.5 L1701.9,14 Z" fill="#d8d8d8"/><rect x="1714.5" y="3" width="1" height="19" fill="#777"/><rect x="1713.5" y="3" width="1" height="19" fill="#3c3c3c"/><circle cx="1732.3" cy="12.3" r="8" fill="#f4f4f6" stroke="#8a8a8a" stroke-width=".8"/><path d="M1729.3,9.8 Q1729.3,7 1732.3,7 Q1735.4,7 1735.4,9.6 Q1735.4,11.2 1733.6,12 Q1732.6,12.6 1732.6,14" fill="none" stroke="#2f4ea0" stroke-width="2.1"/><circle cx="1732.6" cy="16.8" r="1.3" fill="#2f4ea0"/><path d="M1736,8.5 L1741.5,8.5 L1741.5,6 L1745,9.3 L1741.5,12.6 L1741.5,10.2 L1736,10.2 Z" fill="#1e1e1e"/><path d="M1747,10.5 L1752.2,10.5 L1749.6,14 Z" fill="#d8d8d8"/></svg>
<svg class="a" style="left:0px;top:0px;" width="1920" height="24" viewBox="0 0 1920 24"><rect x="1799" y="11" width="10" height="1" fill="#111"/><rect x="1844.5" y="9.5" width="7.5" height="7.5" fill="none" stroke="#111" stroke-width="1"/><path d="M1846.5,9.5 L1846.5,7.5 L1854,7.5 L1854,15 L1852,15" fill="none" stroke="#111" stroke-width="1"/><path d="M1890,6.5 L1900,16.5 M1900,6.5 L1890,16.5" stroke="#111" stroke-width="1.1" fill="none"/></svg>
<div class="a" style="left:0px;top:24px;width:1920px;height:21px;background:#535353;border-top:1px solid #2a2a2a;border-bottom:1px solid #2a2a2a;box-sizing:border-box"></div>
<div class="a" style="left:754px;top:26.5px;width:77px;height:18.5px;background:#5f5f5f;border:1px solid #454545;border-top-color:#363636;border-bottom:none;box-sizing:border-box"></div>
<div class="t" style="left:54.4px;top:28.3px;font:400 12px/15px 'Liberation Sans',sans-serif;color:#d2d2d2;transform:scaleX(1.0778);">Home</div>
<div class="t" style="left:107.4px;top:28.3px;font:400 12px/15px 'Liberation Sans',sans-serif;color:#d2d2d2;transform:scaleX(1.0163);">Insert</div>
<div class="t" style="left:156.4px;top:28.3px;font:400 12px/15px 'Liberation Sans',sans-serif;color:#d2d2d2;transform:scaleX(1.0512);">Annotate</div>
<div class="t" style="left:225.4px;top:28.3px;font:400 12px/15px 'Liberation Sans',sans-serif;color:#d2d2d2;transform:scaleX(1.0084);">Parametric</div>
<div class="t" style="left:302.4px;top:28.3px;font:400 12px/15px 'Liberation Sans',sans-serif;color:#d2d2d2;transform:scaleX(1.0274);">View</div>
<div class="t" style="left:347.4px;top:28.3px;font:400 12px/15px 'Liberation Sans',sans-serif;color:#d2d2d2;transform:scaleX(1.0262);">Manage</div>
<div class="t" style="left:410.4px;top:28.3px;font:400 12px/15px 'Liberation Sans',sans-serif;color:#d2d2d2;transform:scaleX(1.0965);">Output</div>
<div class="t" style="left:468.4px;top:28.3px;font:400 12px/15px 'Liberation Sans',sans-serif;color:#d2d2d2;transform:scaleX(1.0691);">Add-ins</div>
<div class="t" style="left:530.4px;top:28.3px;font:400 12px/15px 'Liberation Sans',sans-serif;color:#d2d2d2;transform:scaleX(0.9812);">A360</div>
<div class="t" style="left:576.4px;top:28.3px;font:400 12px/15px 'Liberation Sans',sans-serif;color:#d2d2d2;transform:scaleX(0.9466);">Express Tools</div>
<div class="t" style="left:665.4px;top:28.3px;font:400 12px/15px 'Liberation Sans',sans-serif;color:#d2d2d2;transform:scaleX(0.9929);">Featured Apps</div>
<div class="t" style="left:761.4px;top:28.3px;font:400 12px/15px 'Liberation Sans',sans-serif;color:#f2f2f2;transform:scaleX(0.9408);">Plex.Earth 4</div>
<svg class="a" style="left:0px;top:24px;" width="900" height="21" viewBox="0 24 900 21"><rect x="854" y="31" width="13" height="7" rx="2" fill="#ececec"/><path d="M857.5,36 L860.5,33 L863.5,36 Z" fill="#333"/><path d="M872,33.5 L877.5,33.5 L874.8,37 Z" fill="#e0e0e0"/></svg>
<div class="a" style="left:0px;top:45px;width:1920px;height:98px;background:linear-gradient(#565656 0,#4c4c4c 2px,#3b3b3b 100%);"></div>
<div class="a" style="left:0px;top:142px;width:1920px;height:1px;background:#222;"></div>
<div class="a" style="left:0px;top:143px;width:1920px;height:1.2px;background:#9c9c9c;"></div>
<div class="a" style="left:3px;top:45px;width:80px;height:79px;background:linear-gradient(#646464 0,#5d5d5d 2px,#5a5a5a 100%);"></div>
<div class="a" style="left:3px;top:124px;width:80px;height:18px;background:#525252;"></div>
<div class="a" style="left:82.6px;top:45px;width:1.1px;height:97px;background:#464646;"></div>
<div class="a" style="left:83.7px;top:45px;width:1.5px;height:97px;background:#636363;"></div>
<div class="a" style="left:87.6px;top:45px;width:1px;height:97px;background:#575757;"></div>
<div class="a" style="left:84px;top:45px;width:165px;height:79px;background:linear-gradient(#646464 0,#5d5d5d 2px,#5a5a5a 100%);"></div>
<div class="a" style="left:84px;top:124px;width:165px;height:18px;background:#525252;"></div>
<div class="a" style="left:248.6px;top:45px;width:1.1px;height:97px;background:#464646;"></div>
<div class="a" style="left:249.7px;top:45px;width:1.5px;height:97px;background:#636363;"></div>
<div class="a" style="left:253.6px;top:45px;width:1px;height:97px;background:#575757;"></div>
<div class="a" style="left:250px;top:45px;width:224px;height:79px;background:linear-gradient(#646464 0,#5d5d5d 2px,#5a5a5a 100%);"></div>
<div class="a" style="left:250px;top:124px;width:224px;height:18px;background:#525252;"></div>
<div class="a" style="left:473.6px;top:45px;width:1.1px;height:97px;background:#464646;"></div>
<div class="a" style="left:474.7px;top:45px;width:1.5px;height:97px;background:#636363;"></div>
<div class="a" style="left:478.6px;top:45px;width:1px;height:97px;background:#575757;"></div>
<div class="a" style="left:475px;top:45px;width:267px;height:79px;background:linear-gradient(#646464 0,#5d5d5d 2px,#5a5a5a 100%);"></div>
<div class="a" style="left:475px;top:124px;width:267px;height:18px;background:#525252;"></div>
<div class="a" style="left:741.6px;top:45px;width:1.1px;height:97px;background:#464646;"></div>
<div class="a" style="left:742.7px;top:45px;width:1.5px;height:97px;background:#636363;"></div>
<div class="a" style="left:746.6px;top:45px;width:1px;height:97px;background:#575757;"></div>
<div class="a" style="left:743px;top:45px;width:83px;height:79px;background:linear-gradient(#646464 0,#5d5d5d 2px,#5a5a5a 100%);"></div>
<div class="a" style="left:743px;top:124px;width:83px;height:18px;background:#525252;"></div>
<div class="a" style="left:825.6px;top:45px;width:1.1px;height:97px;background:#464646;"></div>
<div class="a" style="left:826.7px;top:45px;width:1.5px;height:97px;background:#636363;"></div>
<div class="a" style="left:830.6px;top:45px;width:1px;height:97px;background:#575757;"></div>
<div class="a" style="left:827px;top:45px;width:105px;height:79px;background:linear-gradient(#646464 0,#5d5d5d 2px,#5a5a5a 100%);"></div>
<div class="a" style="left:827px;top:124px;width:105px;height:18px;background:#525252;"></div>
<div class="a" style="left:928.5px;top:45px;width:3.5px;height:97px;background:#656565;"></div>
<div class="a" style="left:932px;top:45px;width:1px;height:97px;background:#3a3a3a;"></div>
<div class="a" style="left:0px;top:45px;width:3px;height:97px;background:#3a3a3a;"></div>
<div class="a" style="left:2px;top:45px;width:1px;height:97px;background:#666;"></div>
<div class="t" style="left:22.4px;top:87.9px;font:400 12px/15px 'Liberation Sans',sans-serif;color:#ececec;transform:scaleX(1.0038);">Specify</div>
<div class="t" style="left:18.4px;top:103.0px;font:400 12px/15px 'Liberation Sans',sans-serif;color:#ececec;transform:scaleX(1.0470);">Location</div>
<div class="t" style="left:98.4px;top:87.9px;font:400 12px/15px 'Liberation Sans',sans-serif;color:#ececec;transform:scaleX(1.0921);">Zoom</div>
<div class="t" style="left:95.4px;top:103.0px;font:400 12px/15px 'Liberation Sans',sans-serif;color:#ececec;transform:scaleX(1.0387);">to Area</div>
<div class="t" style="left:155.4px;top:87.9px;font:400 12px/15px 'Liberation Sans',sans-serif;color:#ececec;transform:scaleX(0.9935);">Export Drawing</div>
<div class="t" style="left:176.4px;top:103.0px;font:400 12px/15px 'Liberation Sans',sans-serif;color:#ececec;transform:scaleX(1.0473);">to KMZ</div>
<div class="t" style="left:258.4px;top:87.9px;font:400 12px/15px 'Liberation Sans',sans-serif;color:#ececec;transform:scaleX(1.1027);">Import</div>
<div class="t" style="left:254.4px;top:103.0px;font:400 12px/15px 'Liberation Sans',sans-serif;color:#ececec;transform:scaleX(1.0266);">Imagery</div>
<div class="t" style="left:402.4px;top:87.9px;font:400 12px/15px 'Liberation Sans',sans-serif;color:#ececec;transform:scaleX(1.0387);">Convert to</div>
<div class="t" style="left:400.4px;top:103.0px;font:400 12px/15px 'Liberation Sans',sans-serif;color:#ececec;transform:scaleX(0.9916);">3D Imagery</div>
<div class="t" style="left:479.4px;top:87.9px;font:400 12px/15px 'Liberation Sans',sans-serif;color:#ececec;transform:scaleX(1.1027);">Import</div>
<div class="t" style="left:480.4px;top:103.0px;font:400 12px/15px 'Liberation Sans',sans-serif;color:#ececec;transform:scaleX(0.9951);">Terrain</div>
<div class="t" style="left:621.4px;top:87.9px;font:400 12px/15px 'Liberation Sans',sans-serif;color:#ececec;transform:scaleX(0.9856);">Create</div>
<div class="t" style="left:618.4px;top:103.0px;font:400 12px/15px 'Liberation Sans',sans-serif;color:#ececec;transform:scaleX(0.9793);">Surface</div>
<div class="t" style="left:680.7px;top:87.9px;font:400 12px/15px 'Liberation Sans',sans-serif;color:#ececec;transform:scaleX(0.9694);">Generate</div>
<div class="t" style="left:679.7px;top:103.0px;font:400 12px/15px 'Liberation Sans',sans-serif;color:#ececec;transform:scaleX(1.0371);">Contours</div>
<div class="t" style="left:766.4px;top:87.9px;font:400 12px/15px 'Liberation Sans',sans-serif;color:#ececec;transform:scaleX(1.1027);">Import</div>
<div class="t" style="left:765.4px;top:103.0px;font:400 12px/15px 'Liberation Sans',sans-serif;color:#ececec;transform:scaleX(1.0305);">Photos</div>
<div class="t" style="left:844.7px;top:87.9px;font:400 12px/15px 'Liberation Sans',sans-serif;color:#ececec;transform:scaleX(1.1190);">My</div>
<div class="t" style="left:830.7px;top:103.0px;font:400 12px/15px 'Liberation Sans',sans-serif;color:#ececec;transform:scaleX(1.0655);">Account</div>
<div class="t" style="left:881.7px;top:87.9px;font:400 12px/15px 'Liberation Sans',sans-serif;color:#ececec;transform:scaleX(1.0498);">Network</div>
<div class="t" style="left:883.7px;top:103.0px;font:400 12px/15px 'Liberation Sans',sans-serif;color:#ececec;transform:scaleX(0.9963);">Settings</div>
<div class="a" style="left:136.5px;top:102.3px;border-left:3px solid transparent;border-right:3px solid transparent;border-top:3px solid #e0e0e0"></div>
<div class="a" style="left:238.5px;top:102.3px;border-left:3px solid transparent;border-right:3px solid transparent;border-top:3px solid #e0e0e0"></div>
<div class="a" style="left:463.5px;top:102.3px;border-left:3px solid transparent;border-right:3px solid transparent;border-top:3px solid #e0e0e0"></div>
<div class="a" style="left:660.5px;top:102.3px;border-left:3px solid transparent;border-right:3px solid transparent;border-top:3px solid #e0e0e0"></div>
<div class="a" style="left:731.8px;top:102.3px;border-left:3px solid transparent;border-right:3px solid transparent;border-top:3px solid #e0e0e0"></div>
<div class="t" style="left:326.4px;top:54.3px;font:400 12px/15px 'Liberation Sans',sans-serif;color:#ececec;transform:scaleX(0.9326);">By GE View</div>
<div class="t" style="left:326.4px;top:78.3px;font:400 12px/15px 'Liberation Sans',sans-serif;color:#ececec;transform:scaleX(0.9875);">By Area</div>
<div class="t" style="left:326.4px;top:102.3px;font:400 12px/15px 'Liberation Sans',sans-serif;color:#ececec;transform:scaleX(0.9875);">By Path</div>
<div class="t" style="left:544.4px;top:54.3px;font:400 12px/15px 'Liberation Sans',sans-serif;color:#ececec;transform:scaleX(0.9326);">By GE View</div>
<div class="t" style="left:544.4px;top:78.3px;font:400 12px/15px 'Liberation Sans',sans-serif;color:#ececec;transform:scaleX(0.9875);">By Area</div>
<div class="t" style="left:544.4px;top:102.3px;font:400 12px/15px 'Liberation Sans',sans-serif;color:#ececec;transform:scaleX(0.9875);">By Path</div>
<div class="t" style="left:6.4px;top:126.1px;font:400 12px/15px 'Liberation Sans',sans-serif;color:#e6e6e6;transform:scaleX(0.9744);">Georeference</div>
<div class="t" style="left:114.4px;top:126.1px;font:400 12px/15px 'Liberation Sans',sans-serif;color:#e6e6e6;transform:scaleX(0.9884);">Quick Google Earth</div>
<div class="t" style="left:339.4px;top:126.1px;font:400 12px/15px 'Liberation Sans',sans-serif;color:#e6e6e6;transform:scaleX(1.0266);">Imagery</div>
<div class="t" style="left:590.4px;top:126.1px;font:400 12px/15px 'Liberation Sans',sans-serif;color:#e6e6e6;transform:scaleX(1.0224);">Terrain</div>
<div class="t" style="left:747.7px;top:126.1px;font:400 12px/15px 'Liberation Sans',sans-serif;color:#e6e6e6;transform:scaleX(1.0352);">Collaboration</div>
<div class="t" style="left:859.4px;top:126.1px;font:400 12px/15px 'Liberation Sans',sans-serif;color:#e6e6e6;transform:scaleX(0.9697);">Service</div>
<svg class="a" style="left:0px;top:45px;" width="960" height="98" viewBox="0 45 960 98"><rect x="27.8" y="55.8" width="23.5" height="20.3" fill="#e6e2ce"/><rect x="33.6" y="55.8" width="5.9" height="20.3" fill="#d6d2bc"/><rect x="45.4" y="55.8" width="5.9" height="20.3" fill="#d6d2bc"/><path d="M31.3,64 Q27.4,59.5 27.8,57.3 A3.6,3.6 0 1 1 34.8,57.3 Q35.2,59.5 31.3,64 Z" fill="#dd5c5c"/><circle cx="31.3" cy="57.6" r="1.7" fill="#f6b4b4"/><polygon points="54.56,73.62 56.51,73.84 56.51,76.16 54.56,76.38 53.85,78.10 55.07,79.63 53.43,81.27 51.90,80.05 50.18,80.76 49.96,82.71 47.64,82.71 47.42,80.76 45.70,80.05 44.17,81.27 42.53,79.63 43.75,78.10 43.04,76.38 41.09,76.16 41.09,73.84 43.04,73.62 43.75,71.90 42.53,70.37 44.17,68.73 45.70,69.95 47.42,69.24 47.64,67.29 49.96,67.29 50.18,69.24 51.90,69.95 53.43,68.73 55.07,70.37 53.85,71.90" fill="#e6edf8" stroke="#5a6a8a" stroke-width=".5" stroke-linejoin="round"/><circle cx="48.8" cy="75" r="2.81" fill="#b8cbe8"/><circle cx="48.8" cy="75" r="1.87" fill="#3b4a6a"/><g fill="none" stroke="#3f6fe0" stroke-width="1.6"><path d="M113,69.5 L113,65.5 L117,65.5"/><path d="M123.5,65.5 L127.5,65.5 L127.5,69.5"/><path d="M113,76 L113,80 L117,80"/></g><circle cx="109.8" cy="62.6" r="10.4" fill="#f4f6fb" stroke="#1c2c6a" stroke-width=".6"/><circle cx="109.8" cy="62.6" r="8.53" fill="#2648ad"/><path d="M102.98,61.32 Q107.24,56.20 111.08,60.89 T117.48,63.03" fill="none" stroke="#eef2fc" stroke-width="2.56" stroke-linecap="round"/><path d="M105.11,66.86 Q109.80,69.00 114.06,66.44" fill="none" stroke="#c8d4f4" stroke-width="1.36" stroke-linecap="round"/><line x1="123.5" y1="76.5" x2="127.5" y2="80.3" stroke="#f4f4f4" stroke-width="2.4" stroke-linecap="round"/><circle cx="120" cy="73" r="5" fill="#dcdcec" stroke="#f8f8f8" stroke-width="1.3"/><circle cx="118.8" cy="71.7" r="2" fill="#f2f2fa"/><polygon points="182,56 195,56 195,68 182,68" fill="#f3e4e2"/><path d="M183.2,66.8 L188.2,52.8 L190.6,52.8 L195,66.8 L192,66.8 L190.9,63.2 L187.2,64 L186.2,66.8 Z" fill="#d9302c"/><path d="M187.9,61.6 L190.3,61 L189.3,57.2 Z" fill="#f3e4e2"/><path d="M183.2,66.8 L188.2,52.8 L189,52.8 L185.6,66.8 Z" fill="#ef5a52"/><path d="M186.2,66.8 L187.2,64 L190.9,63.2 L192,66.8 Z" fill="#a81e1a" opacity=".55"/><polygon points="194.5,59.5 205.5,59.5 210,64 210,82 194.5,82" fill="#f1f1f3" stroke="#c9c9cf" stroke-width=".5"/><polygon points="205.5,59.5 205.5,64 210,64" fill="#cfcfd6"/><circle cx="202" cy="70.6" r="6.20" fill="#2648ad"/><path d="M197.04,69.67 Q200.14,65.95 202.93,69.36 T207.58,70.91" fill="none" stroke="#eef2fc" stroke-width="1.86" stroke-linecap="round"/><path d="M198.59,73.70 Q202.00,75.25 205.10,73.39" fill="none" stroke="#c8d4f4" stroke-width="0.99" stroke-linecap="round"/><rect x="198.5" y="78" width="7" height="1.6" fill="#30406a"/><rect x="262" y="58.8" width="24.3" height="23.7" fill="#ecdcc4"/><rect x="263.6" y="60.4" width="21.1" height="20.5" fill="#6c9fd8"/><path d="M263.6,80.9 L263.6,75.16 L270.985,73.11 L284.70000000000005,61.425 L284.70000000000005,80.9 Z" fill="#f2ab62"/><polygon points="285.8,51.9 278.8,61.9 283.8,61.9 280.3,70.4 291.8,58.9 287.3,58.9 290.8,51.9" fill="#f5b127" stroke="#e2860f" stroke-width=".6" stroke-linejoin="round"/><ellipse cx="285.0" cy="60.2" rx="3.3" ry="2.7" fill="#fff6d6" opacity=".95"/><ellipse cx="285.0" cy="60.2" rx="5.0" ry="4.0" fill="#ffe9a0" opacity=".35"/><rect x="306" y="53" width="11.5" height="11.5" fill="#e8e0d0"/><rect x="307.2" y="54.2" width="9.1" height="9.1" fill="#5f93d2"/><path d="M307.2,63.3 L307.2,60.5 L311,59.5 L316.3,55 L316.3,63.3 Z" fill="#e8b078" opacity=".75"/><circle cx="316" cy="64" r="4.8" fill="#f4f6fb" stroke="#1c2c6a" stroke-width=".6"/><circle cx="316" cy="64" r="3.94" fill="#2648ad"/><path d="M312.85,63.41 Q314.82,61.05 316.59,63.21 T319.54,64.20" fill="none" stroke="#eef2fc" stroke-width="1.18" stroke-linecap="round"/><path d="M313.84,65.97 Q316.00,66.95 317.97,65.77" fill="none" stroke="#c8d4f4" stroke-width="0.70" stroke-linecap="round"/><rect x="306" y="77.5" width="11.5" height="11.5" fill="#e8e0d0"/><rect x="307.2" y="78.7" width="9.1" height="9.1" fill="#5f93d2"/><path d="M307.2,87.8 L307.2,85.0 L311,84.0 L316.3,79.5 L316.3,87.8 Z" fill="#e8b078" opacity=".75"/><polygon points="317,83.5 321.3,86.7 319.7,91.7 314.3,91.7 312.7,86.7" fill="#fbfbfb" stroke="#bbb" stroke-width=".4"/><rect x="306" y="101" width="11.5" height="11.5" fill="#e8e0d0"/><rect x="307.2" y="102.2" width="9.1" height="9.1" fill="#5f93d2"/><path d="M309,112.5 L309,106.5 L314,106.5 L314,104" fill="none" stroke="#f4f4f4" stroke-width="1.5"/><rect x="314.5" y="108.5" width="4.8" height="8" fill="#e9eefc"/><rect x="315.5" y="109.5" width="2.8" height="6" fill="#a8c0f0"/><rect x="417" y="53.8" width="15.5" height="15.6" fill="#ecdcc4"/><rect x="418.3" y="55.099999999999994" width="12.9" height="13.0" fill="#6c9fd8"/><path d="M418.3,68.1 L418.3,64.46 L422.815,63.16 L431.2,55.74999999999999 L431.2,68.1 Z" fill="#f2ab62"/><polygon points="420.8,75 433.8,66.5 446.8,74.5 434.2,83.5" fill="#a9a233"/><polygon points="420.8,75 434.2,83.5 434.2,85.5 420.8,77" fill="#7d7824"/><polygon points="446.8,74.5 434.2,83.5 434.2,85.5 446.8,76.5" fill="#8e8829"/><polygon points="426.5,74.8 434,69.8 441.5,74.6 434.2,79.8" fill="#ea8a3a"/><polygon points="430,70.5 433.8,66.5 438,70.5 434,73" fill="#f0d8a8" opacity=".8"/><rect x="484" y="59.8" width="22.6" height="22" fill="#e6eedc" stroke="#c6d0b8" stroke-width=".5"/><g fill="none" stroke="#86b43c" stroke-width="1.92" clip-path="none"><path d="M484.5,75.9 Q488.4,77.1 490.3,81.3"/><path d="M484.5,71.6 Q491.5,73.7 494.8,81.3"/><path d="M484.5,67.4 Q494.6,70.3 499.4,81.3"/><path d="M489.6,60.6 Q499.8,67.5 506.0,77.4"/></g><polygon points="503.1,52.5 496.4,62.0 501.2,62.0 497.9,70.1 508.8,59.1 504.5,59.1 507.9,52.5" fill="#f5b127" stroke="#e2860f" stroke-width=".6" stroke-linejoin="round"/><ellipse cx="502.3" cy="60.4" rx="3.1" ry="2.6" fill="#fff6d6" opacity=".95"/><ellipse cx="502.3" cy="60.4" rx="4.8" ry="3.8" fill="#ffe9a0" opacity=".35"/><rect x="525" y="53.7" width="11" height="11" fill="#e6eedc" stroke="#c6d0b8" stroke-width=".5"/><g fill="none" stroke="#86b43c" stroke-width="1.00" clip-path="none"><path d="M525.5,61.8 Q527.1,62.4 528.1,64.2"/><path d="M525.5,59.8 Q528.6,60.7 530.3,64.2"/><path d="M525.5,57.7 Q530.1,59.1 532.5,64.2"/><path d="M527.8,54.5 Q532.7,57.6 535.4,62.5"/></g><circle cx="534.8" cy="64" r="4.8" fill="#f4f6fb" stroke="#1c2c6a" stroke-width=".6"/><circle cx="534.8" cy="64" r="3.94" fill="#2648ad"/><path d="M531.65,63.41 Q533.62,61.05 535.39,63.21 T538.34,64.20" fill="none" stroke="#eef2fc" stroke-width="1.18" stroke-linecap="round"/><path d="M532.64,65.97 Q534.80,66.95 536.77,65.77" fill="none" stroke="#c8d4f4" stroke-width="0.70" stroke-linecap="round"/><rect x="525" y="78" width="11" height="11" fill="#e6eedc" stroke="#c6d0b8" stroke-width=".5"/><g fill="none" stroke="#86b43c" stroke-width="1.00" clip-path="none"><path d="M525.5,86.1 Q527.1,86.7 528.1,88.5"/><path d="M525.5,84.0 Q528.6,85.0 530.3,88.5"/><path d="M525.5,82.0 Q530.1,83.4 532.5,88.5"/><path d="M527.8,78.8 Q532.7,81.8 535.4,86.8"/></g><polygon points="535.5,83.8 539.6,86.9 538,91.7 533,91.7 531.4,86.9" fill="#fbfbfb" stroke="#bbb" stroke-width=".4"/><rect x="525" y="102" width="11" height="11" fill="#e6eedc" stroke="#c6d0b8" stroke-width=".5"/><g fill="none" stroke="#86b43c" stroke-width="1.00" clip-path="none"><path d="M525.5,110.1 Q527.1,110.7 528.1,112.5"/><path d="M525.5,108.0 Q528.6,109.0 530.3,112.5"/><path d="M525.5,106.0 Q530.1,107.4 532.5,112.5"/><path d="M527.8,102.8 Q532.7,105.8 535.4,110.8"/></g><rect x="532.8" y="108.5" width="4.6" height="7.8" fill="#e9eefc"/><rect x="533.8" y="109.5" width="2.6" height="5.8" fill="#8fb0ee"/><polygon points="624,78.8 624,66.8 636,54.8 646,66.8 646,78.8" fill="#e9e9ea" stroke="#bdbdbd" stroke-width=".6"/><polygon points="624,66.8 636,54.8 636,67.8" fill="#d4d4d6"/><g stroke="#a9a9ad" stroke-width=".6" fill="none"><path d="M624,66.8 L646,66.8 M636,54.8 L636,66.8 M636,66.8 L624,78.8 M636,66.8 L646,78.8 M636,66.8 L637.0,78.8"/></g><polygon points="647.3,54.0 641.4,62.5 645.6,62.5 642.6,69.7 652.4,60.0 648.6,60.0 651.5,54.0" fill="#f5b127" stroke="#e2860f" stroke-width=".6" stroke-linejoin="round"/><ellipse cx="646.6" cy="61.1" rx="2.8" ry="2.3" fill="#fff6d6" opacity=".95"/><ellipse cx="646.6" cy="61.1" rx="4.2" ry="3.4" fill="#ffe9a0" opacity=".35"/><polygon points="691,78.8 691,66.8 703.5,54.2 714,66.8 714,78.8" fill="#e9e9ea" stroke="#bdbdbd" stroke-width=".6"/><polygon points="691,66.8 703.5,54.2 703.5,67.8" fill="#d4d4d6"/><g stroke="#a9a9ad" stroke-width=".6" fill="none"><path d="M691,66.8 L714,66.8 M703.5,54.2 L703.5,66.8 M703.5,66.8 L691,78.8 M703.5,66.8 L714,78.8 M703.5,66.8 L704.5,78.8"/></g><rect x="705" y="68.2" width="14" height="13.6" fill="#e6eedc" stroke="#c6d0b8" stroke-width=".5"/><g fill="none" stroke="#86b43c" stroke-width="1.19" clip-path="none"><path d="M705.5,78.1 Q707.7,78.9 708.9,81.3"/><path d="M705.5,75.5 Q709.6,76.8 711.7,81.3"/><path d="M705.5,72.9 Q711.5,74.7 714.5,81.3"/><path d="M708.5,69.0 Q714.8,73.0 718.4,79.1"/></g><rect x="770" y="55" width="21.4" height="15.5" rx="1" fill="#3b3b3d"/><rect x="770" y="55" width="21.4" height="3.4" fill="#d6d6d8"/><rect x="774" y="53.6" width="9" height="2.4" rx="1" fill="#c9c9cc"/><rect x="770" y="68.8" width="21.4" height="1.8" fill="#e4e4e6"/><circle cx="781" cy="63.6" r="3.8" fill="#1c1c1e" stroke="#f0f0f2" stroke-width="1.1"/><circle cx="781" cy="63.6" r="1.3" fill="#8a8a92"/><rect x="782" y="68.4" width="16" height="13.2" fill="#f1f3f6"/><rect x="783.2" y="69.6" width="13.6" height="10.8" fill="#3d7de0"/><path d="M783.2,80.4 L783.2,76.5 Q787,74.5 790,76.5 T796.8,75.5 L796.8,80.4 Z" fill="#4a9f46"/><circle cx="786" cy="72.3" r="1.4" fill="#f6e15a"/><circle cx="849.2" cy="64.8" r="12" fill="#35a6ea"/><path d="M842.5,68.5 A3.2,3.2 0 0 1 843,62.2 A4.6,4.6 0 0 1 851.8,61 A3.8,3.8 0 0 1 855.5,68.5 Z" fill="#fdfdfd"/><polygon points="865.86,73.82 867.81,74.04 867.81,76.36 865.86,76.58 865.15,78.30 866.37,79.83 864.73,81.47 863.20,80.25 861.48,80.96 861.26,82.91 858.94,82.91 858.72,80.96 857.00,80.25 855.47,81.47 853.83,79.83 855.05,78.30 854.34,76.58 852.39,76.36 852.39,74.04 854.34,73.82 855.05,72.10 853.83,70.57 855.47,68.93 857.00,70.15 858.72,69.44 858.94,67.49 861.26,67.49 861.48,69.44 863.20,70.15 864.73,68.93 866.37,70.57 865.15,72.10" fill="#e6edf8" stroke="#5a6a8a" stroke-width=".5" stroke-linejoin="round"/><circle cx="860.1" cy="75.2" r="2.81" fill="#b8cbe8"/><circle cx="860.1" cy="75.2" r="1.87" fill="#2b3356"/><circle cx="900.7" cy="64.4" r="12" fill="#86d2dc" stroke="#3f9aa6" stroke-width="1.4"/><circle cx="900.7" cy="64.4" r="8" fill="none" stroke="#b4e6ec" stroke-width="1"/><circle cx="900.7" cy="64.4" r="4.5" fill="none" stroke="#b4e6ec" stroke-width="1"/><path d="M892.7,64.4 H908.7 M900.7,56.4 V72.4" stroke="#b4e6ec" stroke-width=".9"/><polygon points="916.36,73.82 918.31,74.04 918.31,76.36 916.36,76.58 915.65,78.30 916.87,79.83 915.23,81.47 913.70,80.25 911.98,80.96 911.76,82.91 909.44,82.91 909.22,80.96 907.50,80.25 905.97,81.47 904.33,79.83 905.55,78.30 904.84,76.58 902.89,76.36 902.89,74.04 904.84,73.82 905.55,72.10 904.33,70.57 905.97,68.93 907.50,70.15 909.22,69.44 909.44,67.49 911.76,67.49 911.98,69.44 913.70,70.15 915.23,68.93 916.87,70.57 915.65,72.10" fill="#e6edf8" stroke="#5a6a8a" stroke-width=".5" stroke-linejoin="round"/><circle cx="910.6" cy="75.2" r="2.81" fill="#b8cbe8"/><circle cx="910.6" cy="75.2" r="1.87" fill="#2b3356"/></svg>
<div class="a" style="left:0px;top:144.2px;width:1920px;height:25px;background:#383838;"></div>
<div class="a" style="left:0px;top:168.5px;width:1920px;height:4.5px;background:#5a5f67;"></div>
<svg class="a" style="left:0px;top:143px;" width="400" height="27" viewBox="0 143 400 27"><defs><linearGradient id="ftg" x1="0" y1="0" x2="0" y2="1"><stop offset="0" stop-color="#7a7a7a"/><stop offset=".12" stop-color="#6a6a6a"/><stop offset=".8" stop-color="#66676a"/><stop offset="1" stop-color="#5c6067"/></linearGradient></defs><path d="M10,169 Q19,168 22,158 Q25,148 33,147.5 L134,147.5 Q141,148 143,156 L146,169 Z" fill="#595959"/><path d="M140,169 Q144,168 146,158 Q148,148 156,147.5 L296,147.5 Q303,148 305,157 Q307,168 314,169 Z" fill="url(#ftg)"/><path d="M312,152 L331,152 Q333,152 333.5,154 L336,164 Q336.3,166 334,166 L318,166 Q316,166 315.5,164 Z" fill="#515151"/><path d="M319.5,159 H329 M324.2,154.3 V163.7" stroke="#c6c6c6" stroke-width="1.8"/><path d="M287,155.5 L293,161.5 M293,155.5 L287,161.5" stroke="#7c7c7c" stroke-width="1.3"/></svg>
<div class="t" style="left:31.4px;top:151.8px;font:400 12px/15px 'Liberation Sans',sans-serif;color:#bdbdbd;transform:scaleX(1.0062);">Start</div>
<div class="t" style="left:154.4px;top:151.8px;font:400 12px/15px 'Liberation Sans',sans-serif;color:#e8e8e8;transform:scaleX(0.9874);">StGeorgeIsland-Demo*</div>
<div class="a" style="left:0px;top:1010px;width:1920px;height:30px;background:linear-gradient(#565658 0,#444 1.5px,#383838 3px);"></div>
<svg class="a" style="left:0px;top:1010px;" width="240" height="22" viewBox="0 1010 240 22"><defs><linearGradient id="lg1" x1="0" y1="0" x2="0" y2="1"><stop offset="0" stop-color="#6a6a6a"/><stop offset="1" stop-color="#8a8a8a"/></linearGradient></defs>
<path d="M72,1011 L134,1011 Q131,1013 129,1020 Q127,1028.5 121,1028.8 L84,1028.8 Q78,1028.5 76,1020 Q74,1013 72,1011 Z" fill="#545454"/>
<path d="M137,1011 L201,1011 Q198,1013 196,1020 Q194,1028.5 188,1028.8 L149,1028.8 Q143,1028.5 141,1020 Q139,1013 137,1011 Z" fill="#545454"/>
<path d="M9,1011 L70,1011 Q67,1013 65,1020 Q63,1028.5 57,1028.8 L22,1028.8 Q16,1028.5 14,1020 Q12,1013 9,1011 Z" fill="url(#lg1)"/>
<path d="M207,1011 L226,1011 Q224.5,1016 222,1023 Q221,1026 218,1026 L207,1026 Q204.5,1026 205.3,1023 Z" fill="#4e4e4e"/>
<path d="M210.5,1019.8 H219 M214.7,1015.5 V1024" stroke="#e4e4e4" stroke-width="1.8"/></svg>
<div class="t" style="left:22.8px;top:1013.3px;font:700 12px/15px 'Liberation Sans',sans-serif;color:#ffffff;transform:scaleX(1.0472);">Model</div>
<div class="t" style="left:80.6px;top:1013.3px;font:400 12px/15px 'Liberation Sans',sans-serif;color:#d6d6d6;transform:scaleX(0.9906);">Layout1</div>
<div class="t" style="left:145.4px;top:1013.3px;font:400 12px/15px 'Liberation Sans',sans-serif;color:#d6d6d6;transform:scaleX(1.0093);">Layout2</div>
<div class="a" style="left:1116.5px;top:1012px;width:804px;height:27px;background:#4e4e4e;border:1px solid #747474;border-right:none;box-sizing:border-box"></div>
<div class="a" style="left:1328.5px;top:1013px;width:1px;height:25px;background:#3e3e3e;"></div>
<div class="a" style="left:1329.5px;top:1013px;width:1px;height:25px;background:#707070;"></div>
<div class="a" style="left:1377.7px;top:1013px;width:1px;height:25px;background:#3e3e3e;"></div>
<div class="a" style="left:1378.7px;top:1013px;width:1px;height:25px;background:#707070;"></div>
<div class="a" style="left:1444px;top:1013px;width:1px;height:25px;background:#3e3e3e;"></div>
<div class="a" style="left:1445px;top:1013px;width:1px;height:25px;background:#707070;"></div>
<div class="a" style="left:1548.2px;top:1013px;width:1px;height:25px;background:#3e3e3e;"></div>
<div class="a" style="left:1549.2px;top:1013px;width:1px;height:25px;background:#707070;"></div>
<div class="a" style="left:1612.8px;top:1013px;width:1px;height:25px;background:#3e3e3e;"></div>
<div class="a" style="left:1613.8px;top:1013px;width:1px;height:25px;background:#707070;"></div>
<div class="a" style="left:1721px;top:1013px;width:1px;height:25px;background:#3e3e3e;"></div>
<div class="a" style="left:1722px;top:1013px;width:1px;height:25px;background:#707070;"></div>
<div class="a" style="left:1762.6px;top:1013px;width:1px;height:25px;background:#3e3e3e;"></div>
<div class="a" style="left:1763.6px;top:1013px;width:1px;height:25px;background:#707070;"></div>
<div class="a" style="left:1789px;top:1013px;width:1px;height:25px;background:#3e3e3e;"></div>
<div class="a" style="left:1790px;top:1013px;width:1px;height:25px;background:#707070;"></div>
<div class="a" style="left:1815px;top:1013px;width:1px;height:25px;background:#3e3e3e;"></div>
<div class="a" style="left:1816px;top:1013px;width:1px;height:25px;background:#707070;"></div>
<div class="a" style="left:1843.6px;top:1013px;width:1px;height:25px;background:#3e3e3e;"></div>
<div class="a" style="left:1844.6px;top:1013px;width:1px;height:25px;background:#707070;"></div>
<div class="a" style="left:1868.7px;top:1013px;width:1px;height:25px;background:#3e3e3e;"></div>
<div class="a" style="left:1869.7px;top:1013px;width:1px;height:25px;background:#707070;"></div>
<div class="t" style="left:1122.9px;top:1017.6px;font:400 12px/15px 'Liberation Sans',sans-serif;color:#f0f0f0;transform:scaleX(1.0210);">492386.0844, 4146993.2827, 0.0000</div>
<div class="t" style="left:1333.9px;top:1017.6px;font:400 12px/15px 'Liberation Sans',sans-serif;color:#f0f0f0;transform:scaleX(0.9701);">MODEL</div>
<svg class="a" style="left:1380px;top:1010.8px;" width="540" height="30" viewBox="1380 1010 540 30"><g stroke="#2f7bea" stroke-width="1.6"><path d="M1387,1017 V1032 M1390.3,1017 V1032 M1393.6,1017 V1032 M1397,1017 V1032 M1400,1017 V1032"/></g><g stroke="#1f56b8" stroke-width=".8"><path d="M1385.5,1019.5 H1401 M1385.5,1023 H1401 M1385.5,1026.5 H1401 M1385.5,1030 H1401"/></g><g fill="#c9c9c9"><rect x="1410.0" y="1017.5" width="1.3" height="1.3"/><rect x="1410.0" y="1020.7" width="1.3" height="1.3"/><rect x="1410.0" y="1023.9" width="1.3" height="1.3"/><rect x="1410.0" y="1027.1" width="1.3" height="1.3"/><rect x="1410.0" y="1030.3" width="1.3" height="1.3"/><rect x="1413.2" y="1017.5" width="1.3" height="1.3"/><rect x="1413.2" y="1020.7" width="1.3" height="1.3"/><rect x="1413.2" y="1023.9" width="1.3" height="1.3"/><rect x="1413.2" y="1027.1" width="1.3" height="1.3"/><rect x="1413.2" y="1030.3" width="1.3" height="1.3"/><rect x="1416.4" y="1017.5" width="1.3" height="1.3"/><rect x="1416.4" y="1020.7" width="1.3" height="1.3"/><rect x="1416.4" y="1023.9" width="1.3" height="1.3"/><rect x="1416.4" y="1027.1" width="1.3" height="1.3"/><rect x="1416.4" y="1030.3" width="1.3" height="1.3"/><rect x="1419.6" y="1017.5" width="1.3" height="1.3"/><rect x="1419.6" y="1020.7" width="1.3" height="1.3"/><rect x="1419.6" y="1023.9" width="1.3" height="1.3"/><rect x="1419.6" y="1027.1" width="1.3" height="1.3"/><rect x="1419.6" y="1030.3" width="1.3" height="1.3"/><rect x="1422.8" y="1017.5" width="1.3" height="1.3"/><rect x="1422.8" y="1020.7" width="1.3" height="1.3"/><rect x="1422.8" y="1023.9" width="1.3" height="1.3"/><rect x="1422.8" y="1027.1" width="1.3" height="1.3"/><rect x="1422.8" y="1030.3" width="1.3" height="1.3"/></g><path d="M1433.1,1022.3 L1439.5,1022.3 L1436.3,1026.3 Z" fill="#e6e6e6"/><path d="M1454.5,1017 V1031 H1466 M1454.5,1026.5 H1459 V1031" fill="none" stroke="#d4d4d4" stroke-width="1.3"/><circle cx="1482" cy="1024" r="6.3" fill="none" stroke="#d4d4d4" stroke-width="1.3"/><path d="M1482,1024 H1491 M1482,1024 V1017" stroke="#d4d4d4" stroke-width="1.3"/><path d="M1499.6,1022.3 L1506.0,1022.3 L1502.8,1026.3 Z" fill="#e6e6e6"/><path d="M1522,1015.5 V1033 M1514.5,1016.5 L1530.5,1032" stroke="#bdbdbd" stroke-width="1.3" fill="none"/><path d="M1538.3999999999999,1022.3 L1544.8,1022.3 L1541.6,1026.3 Z" fill="#e6e6e6"/><path d="M1570,1031 H1555 L1567,1019.5" fill="none" stroke="#d4d4d4" stroke-width="1.3"/><path d="M1561.5,1031 Q1562,1027.5 1559.5,1026.5" fill="none" stroke="#d4d4d4" stroke-width="1"/><rect x="1581" y="1018" width="13.5" height="13.5" fill="none" stroke="#2f7bea" stroke-width="1.5"/><rect x="1578.8" y="1015.8" width="4.4" height="4.4" fill="#3bd06a" stroke="#0d3a1c" stroke-width=".8"/><path d="M1602.5,1022.3 L1608.9,1022.3 L1605.7,1026.3 Z" fill="#e6e6e6"/><path d="M1621,1032 L1626.2,1021.5 L1627.6,1016 L1629.4,1016 L1630.8,1021.5 L1636,1032 L1632.5,1032 L1629.6,1026.5 L1629.6,1032.5 L1627.4,1032.5 L1627.4,1026.5 L1624.5,1032 Z" fill="#2f7bea"/><circle cx="1633.5" cy="1019.5" r="2.6" fill="none" stroke="#2f7bea" stroke-width="1.2"/><path d="M1646,1032 L1651.2,1021.5 L1652.6,1016 L1654.4,1016 L1655.8,1021.5 L1661,1032 L1657.5,1032 L1654.6,1026.5 L1654.6,1032.5 L1652.4,1032.5 L1652.4,1026.5 L1649.5,1032 Z" fill="#cfcfcf"/><path d="M1656.5,1016 L1654,1020 L1657,1020 L1654.5,1024" fill="none" stroke="#cfcfcf" stroke-width="1.1"/><path d="M1669,1032 L1674.2,1021.5 L1675.6,1016 L1677.4,1016 L1678.8,1021.5 L1684,1032 L1680.5,1032 L1677.6,1026.5 L1677.6,1032.5 L1675.4,1032.5 L1675.4,1026.5 L1672.5,1032 Z" fill="#cfcfcf"/><path d="M1710.8,1022.3 L1717.2,1022.3 L1714,1026.3 Z" fill="#e6e6e6"/><polygon points="1741.18,1022.83 1742.83,1023.02 1742.83,1024.98 1741.18,1025.17 1740.58,1026.62 1741.61,1027.92 1740.22,1029.31 1738.92,1028.28 1737.47,1028.88 1737.28,1030.53 1735.32,1030.53 1735.13,1028.88 1733.68,1028.28 1732.38,1029.31 1730.99,1027.92 1732.02,1026.62 1731.42,1025.17 1729.77,1024.98 1729.77,1023.02 1731.42,1022.83 1732.02,1021.38 1730.99,1020.08 1732.38,1018.69 1733.68,1019.72 1735.13,1019.12 1735.32,1017.47 1737.28,1017.47 1737.47,1019.12 1738.92,1019.72 1740.22,1018.69 1741.61,1020.08 1740.58,1021.38" fill="#cfcfcf" stroke="none" stroke-width=".5" stroke-linejoin="round"/><circle cx="1736.3" cy="1024" r="2.38" fill="#4e4e4e"/><circle cx="1736.3" cy="1024" r="1.58" fill="#4e4e4e"/><path d="M1752.3,1022.3 L1758.7,1022.3 L1755.5,1026.3 Z" fill="#e6e6e6"/><path d="M1769,1024.3 H1783.5 M1776.2,1017 V1031.5" stroke="#e4e4e4" stroke-width="1.7"/><rect x="1795" y="1016.5" width="6" height="6" fill="none" stroke="#cfcfcf" stroke-width="1.2"/><circle cx="1806.5" cy="1022.5" r="3.3" fill="none" stroke="#cfcfcf" stroke-width="1.2"/><path d="M1797,1032 L1800.5,1025.5 L1804,1032 Z" fill="none" stroke="#cfcfcf" stroke-width="1.2"/><circle cx="1830.3" cy="1024.3" r="8.8" fill="#1a63d2"/><circle cx="1830.3" cy="1024.3" r="5" fill="none" stroke="#3f86ee" stroke-width="1.4"/><path d="M1827.8,1026.5 L1833,1021.5" stroke="#0c3d8e" stroke-width="1.5"/><rect x="1849.5" y="1024" width="14.5" height="8" fill="#e6d84a"/><path d="M1849.5,1032 L1856,1025.5 L1860,1029 L1864,1024.5 V1032 Z" fill="#5fae3a"/><path d="M1853,1016 V1023 M1850,1019.5 H1863 M1860,1016 V1023" stroke="#9fc4f4" stroke-width="1.3" fill="none"/><circle cx="1853" cy="1019.5" r="1.9" fill="#f2f6fc" stroke="#3f76c8" stroke-width=".8"/><rect x="1874.5" y="1017.5" width="16" height="13" fill="none" stroke="#dcdcdc" stroke-width="1.3"/><path d="M1884,1020.5 H1888 V1024.5 M1888,1020.5 L1884.5,1024 M1881,1028 H1877 V1024 M1877,1028 L1880.5,1024.5" fill="none" stroke="#dcdcdc" stroke-width="1.2"/><path d="M1899.5,1018.5 H1914.5 M1899.5,1024.3 H1914.5 M1899.5,1030 H1914.5" stroke="#e0e0e0" stroke-width="2"/></svg>
<div class="t" style="left:1692.6px;top:1017.6px;font:700 12px/15px 'Liberation Sans',sans-serif;color:#e8e8e8;transform:scaleX(0.8130);">1:1</div>
<div class="a" style="left:0px;top:1040px;width:1920px;height:40px;background:#04050b;"></div>
<div class="a" style="left:0px;top:1040px;width:48px;height:40px;background:#020203;"></div>
<div class="a" style="left:48px;top:1040px;width:344px;height:40px;background:#393939;"></div>
<div class="a" style="left:835.5px;top:1040px;width:47.5px;height:40px;background:#2a2c35;"></div>
<div class="a" style="left:447.8px;top:1078px;width:39.19999999999999px;height:2px;background:#86b3ea;"></div>
<div class="a" style="left:496px;top:1078px;width:40.39999999999998px;height:2px;background:#86b3ea;"></div>
<div class="a" style="left:545.5px;top:1078px;width:39.0px;height:2px;background:#86b3ea;"></div>
<div class="a" style="left:594.2px;top:1078px;width:39.799999999999955px;height:2px;background:#86b3ea;"></div>
<div class="a" style="left:790.3px;top:1078px;width:39.5px;height:2px;background:#86b3ea;"></div>
<div class="a" style="left:835.5px;top:1078px;width:47.5px;height:2px;background:#86b3ea;"></div>
<div class="a" style="left:888px;top:1078px;width:39px;height:2px;background:#86b3ea;"></div>
<div class="t" style="left:87.4px;top:1051.1px;font:400 15px/19px 'Liberation Sans',sans-serif;color:#bdbdbd;transform:scaleX(0.9730);">Type here to search</div>
<svg class="a" style="left:0px;top:1040px;" width="1920" height="40" viewBox="0 1040 1920 40"><path d="M16,1054.3 L22.8,1053.4 V1059.7 H16 Z M23.8,1053.2 L32,1052 V1059.7 H23.8 Z M16,1060.7 H22.8 V1067 L16,1066.1 Z M23.8,1060.7 H32 V1068.3 L23.8,1067.2 Z" fill="#ffffff"/><circle cx="67.5" cy="1060.5" r="9" fill="none" stroke="#f4f4f4" stroke-width="2.4"/><rect x="368.8" y="1052.5" width="5" height="10.5" rx="2.5" fill="none" stroke="#cfcfcf" stroke-width="1.1"/><path d="M366.5,1060 Q366.5,1065.5 371.3,1065.5 Q376,1065.5 376,1060 M371.3,1065.5 V1068.5 M368.5,1068.5 H374" fill="none" stroke="#cfcfcf" stroke-width="1.1"/><rect x="410.5" y="1054.5" width="11" height="12" fill="none" stroke="#f2f2f2" stroke-width="1.3"/><path d="M408.5,1056 H406.5 V1065 H408.5 M423.5,1056 H425.5 V1065 H423.5" fill="none" stroke="#f2f2f2" stroke-width="1.2"/><circle cx="467" cy="1060.5" r="12" fill="#e8453c"/><path d="M467,1060.5 L456.6,1054.5 A12,12 0 0 0 461,1070.9 Z" fill="#34a853"/><path d="M467,1060.5 L461,1070.9 A12,12 0 0 0 479,1060.5 A12,12 0 0 0 477.4,1054.5 Z" fill="#fbc116"/><path d="M456.6,1054.5 A12,12 0 0 1 477.4,1054.5 L467,1054.5 Z" fill="#e8453c"/><path d="M456.6,1054.5 L461.8,1063.5 L467,1060.5 Z" fill="#34a853"/><circle cx="467" cy="1060.5" r="5.6" fill="#f4f4f4"/><circle cx="467" cy="1060.5" r="4.4" fill="#4a8af4"/><text x="504.5" y="1071.2" font-family="Liberation Sans, sans-serif" font-weight="700" font-size="40" fill="#1b7fe0" textLength="23" lengthAdjust="spacingAndGlyphs">e</text><circle cx="564.5" cy="1060.5" r="12" fill="#f2891c"/><circle cx="566" cy="1059" r="7.6" fill="#2d62c8"/><path d="M553,1057 Q556,1049 564,1048.5 Q559,1052 561,1056 Q565,1056 567,1059 Q563,1061 564,1064 Q568,1068 574,1064 Q572,1072.5 564.5,1072.5 Q553,1071.5 553,1057 Z" fill="#f6a41e"/><path d="M570,1051 Q577,1055 576,1063 Q574,1057 570,1055 Z" fill="#e3501a"/><path d="M601.5,1052 H609 L611,1054 H624 V1057 H601.5 Z" fill="#e8b63c"/><rect x="601.5" y="1055.5" width="23" height="15" fill="#f8d673"/><path d="M606,1063.5 H620 V1070.5 H617 V1067 H609 V1070.5 H606 Z" fill="#3f94e4"/><rect x="606" y="1062" width="14" height="2.4" fill="#2a78c8"/><rect x="652.5" y="1048.5" width="16" height="22.5" fill="#f4f6ee" stroke="#9a9a8a" stroke-width=".6"/><rect x="652.5" y="1048.5" width="16" height="3" fill="#d8dcc8"/><rect x="652.5" y="1057" width="16" height="14" fill="#7dbb3a"/><rect x="654.5" y="1053" width="1.8" height="14" fill="#2b5a1c"/><path d="M658,1058 H664 M658,1061 H662" stroke="#2b5a1c" stroke-width="1"/><path d="M664,1061 L670.5,1048.5 L672.5,1049.5 L666.3,1062 L663.8,1063.5 Z" fill="#e9b13c" stroke="#7a5a1a" stroke-width=".5"/><path d="M700,1048.5 H718.5 L723.5,1053.5 V1072 H700 Z" fill="#8a2b8f"/><path d="M718.5,1048.5 V1053.5 H723.5 Z" fill="#5c1a60"/><path d="M716,1056.5 Q712,1052.5 708,1055.5 Q704.5,1059 707.5,1063 Q711,1066 715.5,1063 Q716.5,1061 716,1059 L711,1059.5 L712,1061.5" fill="none" stroke="#f8f0f8" stroke-width="2"/><rect x="704" y="1067" width="14" height="3.2" fill="#e8d4ea"/><path d="M749,1054.5 L751.5,1053.2 L760,1060 L769,1050 L773,1051.8 V1069.8 L769,1071.5 L760,1062 L751.5,1068.5 L749,1067.3 Z" fill="#7b2fa3"/><path d="M751.8,1057 L756,1060.8 L751.8,1064.5 Z M769,1055.8 V1065.8 L763.3,1060.8 Z" fill="#f4eefa"/><path d="M749,1054.5 L751.5,1053.2 L760,1060 L769,1050 L773,1051.8 V1069.8 L769,1071.5 L760,1062 L751.5,1068.5 L749,1067.3 Z" fill="none" stroke="#e8dcf2" stroke-width="1"/><circle cx="809.8" cy="1060.5" r="11.5" fill="#9a9da3"/><path d="M799,1057 Q806,1051 815,1054 T821,1058" fill="none" stroke="#d9dbe0" stroke-width="2.6"/><path d="M799,1062.5 Q807,1057.5 814,1061 T821,1063" fill="none" stroke="#c4c6cc" stroke-width="2"/><rect x="803.5" y="1064.5" width="13" height="6.5" fill="#3a3c42"/><rect x="805.5" y="1066.3" width="9" height="3" fill="#c9cbd0"/><rect x="846" y="1048" width="25" height="25.5" fill="#f5e3e0"/><path d="M850.5,1069.5 L857,1051.5 L861,1051.5 L866.8,1069.5 L862.8,1069.5 L861.5,1065 L855.8,1066.2 L854.6,1069.5 Z M856.8,1063 L860.6,1062.2 L859,1056.5 Z" fill="#d62d27" fill-rule="evenodd"/><rect x="895" y="1048" width="25" height="25.5" rx="3.5" fill="#f2572e"/><path d="M915,1054.5 H904.5 Q901.5,1054.5 901.5,1057.5 V1064 Q901.5,1067 904.5,1067 H915" fill="none" stroke="#fbeee8" stroke-width="3.6"/><path d="M1677,1063 L1683,1057 L1689,1063" fill="none" stroke="#f2f2f2" stroke-width="1.3"/><g fill="#f4f4f4"><path d="M1703,1052 L1706.8,1054.5 L1703,1057 L1699.2,1054.5 Z M1711,1052 L1714.8,1054.5 L1711,1057 L1707.2,1054.5 Z M1703,1057.8 L1706.8,1060.3 L1703,1062.8 L1699.2,1060.3 Z M1707,1061.5 L1710,1063.5 L1707,1066.5 L1703.5,1064 Z"/></g><circle cx="1710.3" cy="1063.6" r="4.3" fill="#2fa64a"/><path d="M1708.2,1063.6 L1709.8,1065.2 L1712.6,1062.2" fill="none" stroke="#f2fff2" stroke-width="1.1"/><rect x="1726.5" y="1054.5" width="12" height="8.5" fill="none" stroke="#f2f2f2" stroke-width="1.2"/><path d="M1732.5,1063 V1066.5 M1728.5,1066.5 H1736.5" stroke="#f2f2f2" stroke-width="1.2"/><rect x="1723" y="1055.5" width="4" height="3.5" fill="#04050b" stroke="#f2f2f2" stroke-width="1"/><path d="M1725,1059 V1066.5 H1728" fill="none" stroke="#f2f2f2" stroke-width="1"/><path d="M1747,1058 H1750 L1754,1054 V1067 L1750,1063 H1747 Z" fill="none" stroke="#f2f2f2" stroke-width="1.1"/><path d="M1756.5,1057.5 Q1758.5,1060.5 1756.5,1063.5" fill="none" stroke="#f2f2f2" stroke-width="1"/><path d="M1759,1055.5 Q1762,1060.5 1759,1065.5" fill="none" stroke="#8a8a8a" stroke-width="1"/><path d="M1761.5,1053.8 Q1765.5,1060.5 1761.5,1067.2" fill="none" stroke="#5a5a5a" stroke-width="1"/><path d="M1880,1052.8 H1894.5 V1064 H1889.5 L1887.2,1066.5 L1885,1064 H1880 Z" fill="none" stroke="#f2f2f2" stroke-width="1.2"/><rect x="1915" y="1040" width="1" height="40" fill="#6a6a6a"/></svg>
<div class="t" style="left:1772.9px;top:1053.1px;font:400 12px/15px 'Liberation Sans',sans-serif;color:#f4f4f4;transform:scaleX(0.8999);">ENG</div>
<div class="t" style="left:1815.8px;top:1043.6px;font:400 12px/15px 'Liberation Sans',sans-serif;color:#f4f4f4;transform:scaleX(0.9551);">5:16 μμ</div>
<div class="t" style="left:1808.4px;top:1061.9px;font:400 12px/15px 'Liberation Sans',sans-serif;color:#f4f4f4;transform:scaleX(0.9909);">21/7/2017</div>
</body></html>
